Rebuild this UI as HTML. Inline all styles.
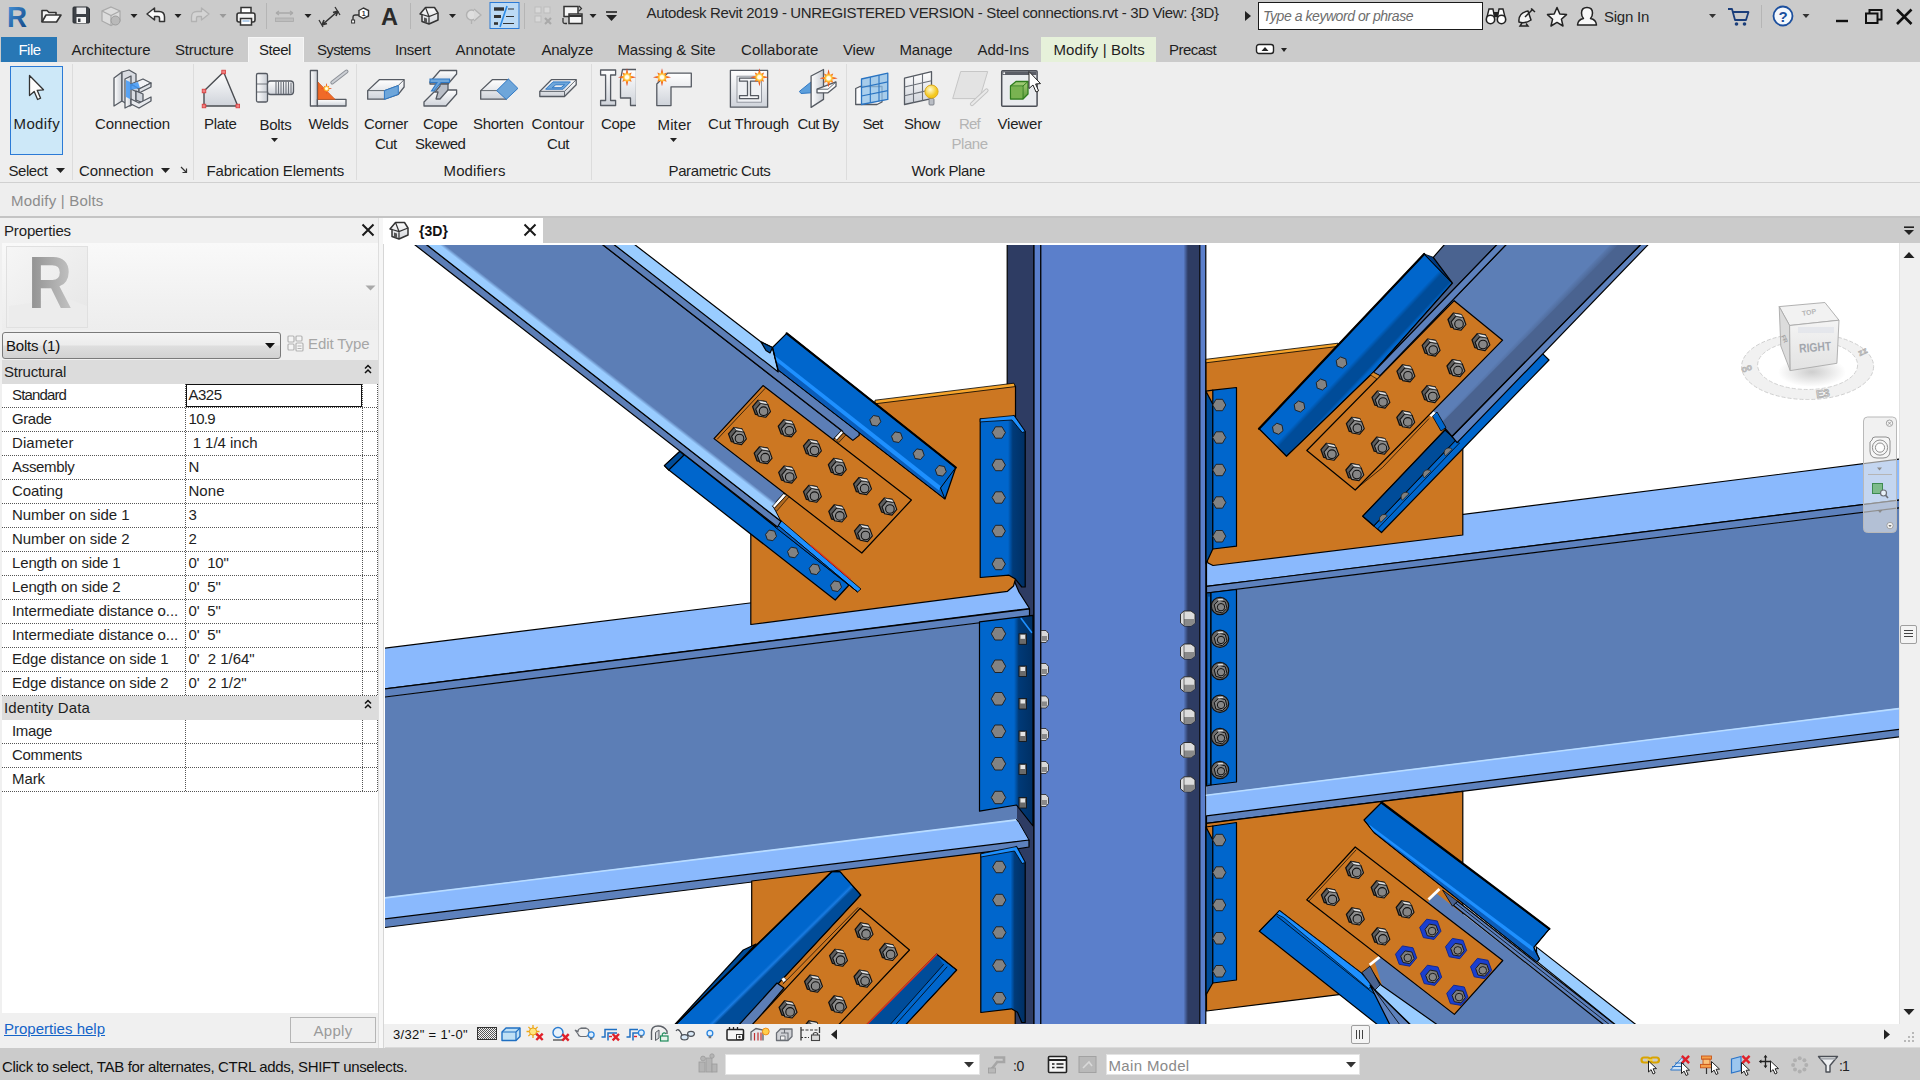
<!DOCTYPE html>
<html><head><meta charset="utf-8"><title>Autodesk Revit 2019 - Steel connections.rvt - 3D View: {3D}</title>
<style>
html,body{margin:0;padding:0}
body{width:1920px;height:1080px;position:relative;overflow:hidden;background:#cbcbcb;font-family:"Liberation Sans",sans-serif}
.t{position:absolute;white-space:nowrap;display:block}
.r{position:absolute;box-sizing:border-box;display:block}
</style></head><body>

<div class="r" style="left:0px;top:0px;width:1920px;height:62px;background:#cbcbcb;"></div>
<svg class="r" style="left:0px;top:0px;" width="640" height="34" viewBox="0 0 640 34"><defs><linearGradient id="rlg" x1="0" y1="0" x2="1" y2="1"><stop offset="0" stop-color="#4b9be0"/><stop offset="1" stop-color="#0d3f7e"/></linearGradient><linearGradient id="gl" x1="0" y1="0" x2="0" y2="1"><stop offset="0" stop-color="#fdfdfd"/><stop offset="1" stop-color="#d4d6da"/></linearGradient></defs><text x="7" y="27" font-family="Liberation Sans, sans-serif" font-weight="bold" font-size="30" fill="url(#rlg)" textLength="20" lengthAdjust="spacingAndGlyphs">R</text><g transform="translate(41,8)"><path d="M1 14 V2.5 H6 L8 4.5 H15 V7" fill="#f4f4f4" stroke="#333" stroke-width="1.6" stroke-linejoin="round"/><path d="M1 14 L5 7 H20 L15.5 14 Z" fill="#fafafa" stroke="#333" stroke-width="1.6" stroke-linejoin="round"/></g><g transform="translate(72,6)"><path d="M1 2 Q1 1 2 1 H15.5 L17.5 3 V16 Q17.5 17 16.5 17 H2 Q1 17 1 16 Z" fill="#3c4046" stroke="#2b2e33" stroke-width="1"/><rect x="4.5" y="1.5" width="9.5" height="6.5" fill="#e9eaec"/><rect x="4.5" y="11" width="9.5" height="6" fill="#f5f5f5"/><rect x="6" y="12.5" width="2.5" height="3.5" fill="#3c4046"/></g><g transform="translate(101,6)"><path d="M10 1 L19 5 V15 L10 19.5 L1 15 V5 Z" fill="#dcdcdc" stroke="#a9a9a9" stroke-width="1.2"/><path d="M1 5 L10 9.5 L19 5 M10 9.5 V19.5" fill="none" stroke="#a9a9a9" stroke-width="1.2"/><circle cx="14.5" cy="14.5" r="4.5" fill="#b9b9b9" stroke="#9d9d9d"/></g><g transform="translate(130.5,14)"><path d="M0 0 L7 0 L3.5 4 Z" fill="#222"/></g><g transform="translate(146,7)"><path d="M1 7 L8.5 1 V4.5 H13 Q18.5 4.5 18.5 10 V14.5 H13.5 V11 Q13.5 9.5 12 9.5 H8.5 V13 Z" fill="#fafafa" stroke="#333" stroke-width="1.5" stroke-linejoin="round"/></g><g transform="translate(174.5,14)"><path d="M0 0 L7 0 L3.5 4 Z" fill="#222"/></g><g transform="translate(191,7)"><path d="M18 7 L10.5 1 V4.5 H6 Q0.5 4.5 0.5 10 V14.5 H5.5 V11 Q5.5 9.5 7 9.5 H10.5 V13 Z" fill="#d4d4d4" stroke="#b2b2b2" stroke-width="1.3" stroke-linejoin="round"/></g><g transform="translate(219.5,14)"><path d="M0 0 L7 0 L3.5 4 Z" fill="#9a9a9a"/></g><g transform="translate(236,6)"><rect x="5" y="1.5" width="10" height="6" fill="#fff" stroke="#333" stroke-width="1.5"/><rect x="1" y="7" width="18" height="9" rx="2" fill="#f2f2f2" stroke="#333" stroke-width="1.6"/><rect x="4.5" y="12.5" width="11" height="6.5" fill="#fff" stroke="#333" stroke-width="1.5"/><path d="M6.5 15 H13.5" stroke="#6aa0d8" stroke-width="1"/></g><path d="M266.5 3 V29" stroke="#b5b5b5" stroke-width="1"/><g transform="translate(275,9)"><path d="M1 4 H18 M1 4 L4 2 M1 4 L4 6 M18 4 L15 2 M18 4 L15 6" fill="none" stroke="#a9a9a9" stroke-width="1.3"/><rect x="0.5" y="9" width="18" height="3.5" fill="#bdbdbd" stroke="#a9a9a9" stroke-width="0.8"/></g><g transform="translate(304.5,14)"><path d="M0 0 L7 0 L3.5 4 Z" fill="#222"/></g><g transform="translate(319,6)"><path d="M3 19 L19 5 M3 19 L5 14 M3 19 L8 17.5 M19 5 L14 6.5 M19 5 L17 10" fill="none" stroke="#333" stroke-width="1.6"/><path d="M0 14 L4 21 M16 1 L21 9" stroke="#333" stroke-width="1.3"/></g><g transform="translate(351,6)"><path d="M8 4.5 L12.5 2 L17.5 4.5 V10 L12.5 12.5 L8 10 Z" fill="#fff" stroke="#333" stroke-width="1.4"/><text x="10.8" y="10.2" font-size="7" font-weight="bold" fill="#333" font-family="Liberation Sans, sans-serif">1</text><path d="M8 9 H4.5 Q2 9 2 11.5 V14.5" fill="none" stroke="#333" stroke-width="1.4"/><rect x="0.6" y="14" width="3" height="3" fill="#fff" stroke="#333"/></g><text x="381" y="25" font-family="Liberation Sans, sans-serif" font-weight="bold" font-size="24" fill="#2b2b2b" textLength="17" lengthAdjust="spacingAndGlyphs">A</text><path d="M410.5 3 V29" stroke="#b5b5b5" stroke-width="1"/><g transform="translate(419,6) scale(1.0)"><path d="M1 8 L6.5 1.5 L15.5 1.5 L19 7 V14 L10 18 L3 15.5 V8.5 Z" fill="url(#gl)" stroke="#333" stroke-width="1.5" stroke-linejoin="round"/><path d="M3 8.5 L10 10.5 L19 7 M10 10.5 V18 M6.5 1.5 L10 10.5" fill="none" stroke="#333" stroke-width="1.2"/><path d="M5 11.5 L8 12.5 V17 L5 16 Z" fill="#555"/></g><g transform="translate(449,14)"><path d="M0 0 L7 0 L3.5 4 Z" fill="#222"/></g><g transform="translate(465,7)"><circle cx="6.5" cy="8" r="5" fill="#dedede" stroke="#b2b2b2" stroke-width="1.5"/><path d="M9 2 L16 8 L9 14" fill="#d8d8d8" stroke="#b2b2b2" stroke-width="1.3"/><path d="M6.5 13 V17" stroke="#b2b2b2" stroke-width="1.3"/></g><rect x="490" y="2.5" width="29" height="26" fill="#bcdaf5" stroke="#2b7ad6" stroke-width="1"/><g transform="translate(493,6)"><path d="M1 3 H11" stroke="#333" stroke-width="3.4"/><path d="M1 10.5 H8" stroke="#333" stroke-width="3"/><path d="M1 17.5 H5" stroke="#333" stroke-width="2.6"/><path d="M15 3 H21 M13 10.5 H21 M10 17.5 H21" stroke="#333" stroke-width="1.2"/><path d="M14 0 L7 21" stroke="#2b8ae6" stroke-width="1.6"/></g><path d="M524.5 3 V29" stroke="#b5b5b5" stroke-width="1"/><g transform="translate(534,6)"><rect x="1" y="1" width="6" height="6" fill="#d8d8d8" stroke="#bdbdbd"/><rect x="10" y="1" width="6" height="6" fill="#d8d8d8" stroke="#bdbdbd"/><rect x="1" y="10" width="6" height="6" fill="#d8d8d8" stroke="#bdbdbd"/><path d="M11 12 L17 18 M17 12 L11 18" stroke="#a9a9a9" stroke-width="2.2"/></g><g transform="translate(562,5)"><rect x="2" y="1.5" width="14" height="10" fill="#f6f6f6" stroke="#333" stroke-width="1.5"/><rect x="7" y="9" width="13" height="9.5" fill="#f6f6f6" stroke="#333" stroke-width="1.5"/><path d="M7 11 H20" stroke="#333" stroke-width="2"/><path d="M1 13 V17 Q1 18.5 3 18.5 H5" fill="none" stroke="#333" stroke-width="1.3"/><path d="M17 1 L19.5 3.5 L17 6" fill="none" stroke="#333" stroke-width="1.2"/></g><g transform="translate(589.5,14)"><path d="M0 0 L7 0 L3.5 4 Z" fill="#222"/></g><g transform="translate(606,11)"><path d="M0 1 H11" stroke="#222" stroke-width="1.6"/><path d="M0 4 L11 4 L5.5 10 Z" fill="#222"/></g></svg>
<span class="t" style="left:646.5px;top:3.0px;font-size:15px;line-height:19px;color:#262626;letter-spacing:-0.36px;">Autodesk Revit 2019 - UNREGISTERED VERSION - Steel connections.rvt - 3D View: {3D}</span>
<svg class="r" style="left:1244px;top:10px;" width="8" height="12" viewBox="0 0 8 12"><path d="M1 1 L7 6 L1 11 Z" fill="#222"/></svg>
<div class="r" style="left:1258px;top:2px;width:225px;height:28px;background:#fff;border:1px solid #1a1a1a"></div>
<span class="t" style="left:1263.0px;top:7.0px;font-size:14px;line-height:18px;color:#6d6d6d;letter-spacing:-0.45px;font-style:italic;">Type a keyword or phrase</span>
<svg class="r" style="left:0px;top:0px;" width="1920" height="34" viewBox="0 0 1920 34"><g transform="translate(1485,7)"><path d="M2 10 L4 2 H8 L9.5 10 Z M12.5 10 L14 2 H18 L20 10 Z" fill="#fff" stroke="#222" stroke-width="1.4"/><circle cx="5.5" cy="12.5" r="4.2" fill="#fff" stroke="#222" stroke-width="1.6"/><circle cx="16.5" cy="12.5" r="4.2" fill="#fff" stroke="#222" stroke-width="1.6"/><rect x="9" y="5" width="4" height="5" fill="#222"/></g><g transform="translate(1516,7)"><path d="M3 15 Q2 6 12 4 L15 13 Q9 17 3 15 Z" fill="#f4f4f4" stroke="#222" stroke-width="1.5"/><path d="M9 10 L17 2 M15 1.5 L19 5" stroke="#222" stroke-width="1.5"/><path d="M6 16 L4 19 H12 L10 16.5" fill="none" stroke="#222" stroke-width="1.4"/></g><g transform="translate(1546,6)"><path d="M11 1.5 L13.8 8 L20.5 8.6 L15.4 13.2 L17 20 L11 16.4 L5 20 L6.6 13.2 L1.5 8.6 L8.2 8 Z" fill="#f8f8f8" stroke="#222" stroke-width="1.5" stroke-linejoin="round"/></g><g transform="translate(1576,6)"><path d="M1.5 19 Q2 13.5 7.5 12.5 Q5.5 10.5 5.5 7 Q5.5 1.5 11 1.5 Q16.5 1.5 16.5 7 Q16.5 10.5 14.5 12.5 Q20 13.5 20.5 19 Z" fill="#f8f8f8" stroke="#222" stroke-width="1.5" stroke-linejoin="round"/></g><g transform="translate(1709,14)"><path d="M0 0 L7 0 L3.5 4 Z" fill="#333"/></g><g transform="translate(1727,7)"><path d="M1 2 H5 L8 13 H19 L21.5 5 H6" fill="none" stroke="#1b3e7a" stroke-width="1.8" stroke-linejoin="round"/><circle cx="9.5" cy="17" r="1.8" fill="#1b3e7a"/><circle cx="17.5" cy="17" r="1.8" fill="#1b3e7a"/></g><path d="M1761.5 5 V28" stroke="#b5b5b5" stroke-width="1"/><g transform="translate(1772,5)"><circle cx="11" cy="11" r="9.5" fill="#f4f8fd" stroke="#1b4f9e" stroke-width="1.8"/><text x="6.6" y="16.5" font-family="Liberation Sans, sans-serif" font-weight="bold" font-size="15" fill="#1b4f9e">?</text></g><g transform="translate(1802.5,14)"><path d="M0 0 L7 0 L3.5 4 Z" fill="#333"/></g><path d="M1836 21 H1848" stroke="#111" stroke-width="2.4"/><rect x="1866" y="13.5" width="11.5" height="9.5" fill="none" stroke="#111" stroke-width="2"/><path d="M1869.5 13 V10 H1881.5 V19.5 H1878" fill="none" stroke="#111" stroke-width="2"/><path d="M1897 9.5 L1911.5 24 M1911.5 9.5 L1897 24" stroke="#111" stroke-width="2.6"/></svg>
<span class="t" style="left:1604.0px;top:7.0px;font-size:15px;line-height:19px;color:#262626;letter-spacing:-0.24px;">Sign In</span>
<div class="r" style="left:1px;top:37px;width:56px;height:25px;background:#2877b5;"></div>
<span class="t" style="left:18.5px;top:40.0px;font-size:15px;line-height:19px;color:#ffffff;letter-spacing:-0.54px;">File</span>
<div class="r" style="left:248px;top:37px;width:56px;height:26px;background:#eeeeee;border:1px solid #f6f6f6;border-bottom:none"></div>
<div class="r" style="left:1041px;top:37px;width:115px;height:25px;background:#e6f1da;"></div>
<span class="t" style="left:71.5px;top:40.0px;font-size:15px;line-height:19px;color:#1e1e1e;letter-spacing:-0.09px;">Architecture</span>
<span class="t" style="left:175.0px;top:40.0px;font-size:15px;line-height:19px;color:#1e1e1e;letter-spacing:-0.26px;">Structure</span>
<span class="t" style="left:259.0px;top:40.0px;font-size:15px;line-height:19px;color:#1e1e1e;letter-spacing:-0.44px;">Steel</span>
<span class="t" style="left:317.0px;top:40.0px;font-size:15px;line-height:19px;color:#1e1e1e;letter-spacing:-0.64px;">Systems</span>
<span class="t" style="left:395.0px;top:40.0px;font-size:15px;line-height:19px;color:#1e1e1e;letter-spacing:-0.34px;">Insert</span>
<span class="t" style="left:455.5px;top:40.0px;font-size:15px;line-height:19px;color:#1e1e1e;letter-spacing:-0.01px;">Annotate</span>
<span class="t" style="left:541.5px;top:40.0px;font-size:15px;line-height:19px;color:#1e1e1e;letter-spacing:-0.27px;">Analyze</span>
<span class="t" style="left:617.5px;top:40.0px;font-size:15px;line-height:19px;color:#1e1e1e;letter-spacing:-0.15px;">Massing &amp; Site</span>
<span class="t" style="left:741.0px;top:40.0px;font-size:15px;line-height:19px;color:#1e1e1e;letter-spacing:0.07px;">Collaborate</span>
<span class="t" style="left:843.0px;top:40.0px;font-size:15px;line-height:19px;color:#1e1e1e;letter-spacing:-0.19px;">View</span>
<span class="t" style="left:899.5px;top:40.0px;font-size:15px;line-height:19px;color:#1e1e1e;letter-spacing:-0.20px;">Manage</span>
<span class="t" style="left:977.5px;top:40.0px;font-size:15px;line-height:19px;color:#1e1e1e;letter-spacing:-0.03px;">Add-Ins</span>
<span class="t" style="left:1053.5px;top:40.0px;font-size:15px;line-height:19px;color:#1e1e1e;letter-spacing:0.12px;">Modify | Bolts</span>
<span class="t" style="left:1169.0px;top:40.0px;font-size:15px;line-height:19px;color:#1e1e1e;letter-spacing:-0.55px;">Precast</span>
<svg class="r" style="left:1255px;top:43px;" width="36" height="14" viewBox="0 0 36 14"><rect x="1.5" y="1.5" width="17" height="9" rx="2.5" fill="#fff" stroke="#222" stroke-width="1.4"/><path d="M6.5 8 L10 4 L13.5 8 Z" fill="#222"/><path d="M26 5 L32 5 L29 9 Z" fill="#222"/></svg>
<div class="r" style="left:0px;top:62px;width:1920px;height:121px;background:#eeeeee;"></div>
<div class="r" style="left:0px;top:182px;width:1920px;height:1px;background:#d0d0d0;"></div>
<div class="r" style="left:0px;top:183px;width:1920px;height:33px;background:#eeeeee;"></div>
<div class="r" style="left:0px;top:216px;width:1920px;height:2px;background:#c4c4c4;"></div>
<div class="r" style="left:72px;top:64px;width:1px;height:116px;background:#dcdcdc;"></div>
<div class="r" style="left:193px;top:64px;width:1px;height:116px;background:#dcdcdc;"></div>
<div class="r" style="left:356px;top:64px;width:1px;height:116px;background:#dcdcdc;"></div>
<div class="r" style="left:591px;top:64px;width:1px;height:116px;background:#dcdcdc;"></div>
<div class="r" style="left:846px;top:64px;width:1px;height:116px;background:#dcdcdc;"></div>
<div class="r" style="left:10px;top:66px;width:53px;height:89px;background:#cde8f8;border:1px solid #2b7ad6"></div>
<span class="t" style="left:13.5px;top:114.0px;font-size:15px;line-height:19px;color:#1e1e1e;letter-spacing:0.39px;">Modify</span>
<span class="t" style="left:95.0px;top:114.0px;font-size:15px;line-height:19px;color:#1e1e1e;letter-spacing:-0.09px;">Connection</span>
<span class="t" style="left:204.0px;top:114.0px;font-size:15px;line-height:19px;color:#1e1e1e;letter-spacing:-0.34px;">Plate</span>
<span class="t" style="left:259.5px;top:115.0px;font-size:15px;line-height:19px;color:#1e1e1e;letter-spacing:-0.27px;">Bolts</span>
<span class="t" style="left:308.5px;top:114.0px;font-size:15px;line-height:19px;color:#1e1e1e;letter-spacing:-0.28px;">Welds</span>
<span class="t" style="left:364.0px;top:114.0px;font-size:15px;line-height:19px;color:#1e1e1e;letter-spacing:-0.31px;">Corner</span>
<span class="t" style="left:375.0px;top:134.0px;font-size:15px;line-height:19px;color:#1e1e1e;letter-spacing:-0.61px;">Cut</span>
<span class="t" style="left:423.0px;top:114.0px;font-size:15px;line-height:19px;color:#1e1e1e;letter-spacing:-0.34px;">Cope</span>
<span class="t" style="left:415.0px;top:134.0px;font-size:15px;line-height:19px;color:#1e1e1e;letter-spacing:-0.48px;">Skewed</span>
<span class="t" style="left:473.0px;top:114.0px;font-size:15px;line-height:19px;color:#1e1e1e;letter-spacing:-0.29px;">Shorten</span>
<span class="t" style="left:531.5px;top:114.0px;font-size:15px;line-height:19px;color:#1e1e1e;letter-spacing:-0.12px;">Contour</span>
<span class="t" style="left:547.0px;top:134.0px;font-size:15px;line-height:19px;color:#1e1e1e;letter-spacing:-0.45px;">Cut</span>
<span class="t" style="left:601.0px;top:114.0px;font-size:15px;line-height:19px;color:#1e1e1e;letter-spacing:-0.34px;">Cope</span>
<span class="t" style="left:657.5px;top:115.0px;font-size:15px;line-height:19px;color:#1e1e1e;letter-spacing:0.13px;">Miter</span>
<span class="t" style="left:708.0px;top:114.0px;font-size:15px;line-height:19px;color:#1e1e1e;letter-spacing:-0.19px;">Cut Through</span>
<span class="t" style="left:797.5px;top:114.0px;font-size:15px;line-height:19px;color:#1e1e1e;letter-spacing:-0.67px;">Cut By</span>
<span class="t" style="left:862.5px;top:114.0px;font-size:15px;line-height:19px;color:#1e1e1e;letter-spacing:-0.84px;">Set</span>
<span class="t" style="left:904.0px;top:114.0px;font-size:15px;line-height:19px;color:#1e1e1e;letter-spacing:-0.38px;">Show</span>
<span class="t" style="left:997.5px;top:114.0px;font-size:15px;line-height:19px;color:#1e1e1e;letter-spacing:-0.18px;">Viewer</span>
<span class="t" style="left:959.0px;top:114.0px;font-size:15px;line-height:19px;color:#b4b4b4;letter-spacing:-0.78px;">Ref</span>
<span class="t" style="left:951.5px;top:134.0px;font-size:15px;line-height:19px;color:#b4b4b4;letter-spacing:-0.47px;">Plane</span>
<span class="t" style="left:8.5px;top:161.0px;font-size:15px;line-height:19px;color:#1e1e1e;letter-spacing:-0.45px;">Select</span>
<span class="t" style="left:79.0px;top:161.0px;font-size:15px;line-height:19px;color:#1e1e1e;letter-spacing:-0.14px;">Connection</span>
<span class="t" style="left:206.5px;top:161.0px;font-size:15px;line-height:19px;color:#1e1e1e;letter-spacing:-0.17px;">Fabrication Elements</span>
<span class="t" style="left:443.5px;top:161.0px;font-size:15px;line-height:19px;color:#1e1e1e;letter-spacing:0.13px;">Modifiers</span>
<span class="t" style="left:668.5px;top:161.0px;font-size:15px;line-height:19px;color:#1e1e1e;letter-spacing:-0.37px;">Parametric Cuts</span>
<span class="t" style="left:911.5px;top:161.0px;font-size:15px;line-height:19px;color:#1e1e1e;letter-spacing:-0.38px;">Work Plane</span>
<svg class="r" style="left:56px;top:168px;" width="9" height="5" viewBox="0 0 9 5"><path d="M0 0 L9 0 L4.5 5 Z" fill="#222"/></svg>
<svg class="r" style="left:161px;top:168px;" width="9" height="5" viewBox="0 0 9 5"><path d="M0 0 L9 0 L4.5 5 Z" fill="#222"/></svg>
<svg class="r" style="left:180px;top:166px;" width="8" height="8" viewBox="0 0 8 8"><path d="M1 1 L6 6 M2.5 6.5 L6.5 6.5 L6.5 2.5" fill="none" stroke="#333" stroke-width="1.2"/></svg>
<svg class="r" style="left:271px;top:138px;" width="8" height="5" viewBox="0 0 8 5"><path d="M0 0 L7 0 L3.5 4 Z" fill="#222"/></svg>
<svg class="r" style="left:670px;top:138px;" width="8" height="5" viewBox="0 0 8 5"><path d="M0 0 L7 0 L3.5 4 Z" fill="#222"/></svg>
<svg class="r" style="left:0px;top:0px;" width="1100" height="122" viewBox="0 0 1100 122"><defs><linearGradient id="ig" x1="0" y1="0" x2="0" y2="1"><stop offset="0" stop-color="#ffffff"/><stop offset="1" stop-color="#cfd3da"/></linearGradient><linearGradient id="ig2" x1="0" y1="0" x2="1" y2="0"><stop offset="0" stop-color="#ffffff"/><stop offset="1" stop-color="#c9cdd4"/></linearGradient><radialGradient id="spk"><stop offset="0" stop-color="#ffffff"/><stop offset="0.22" stop-color="#fff1a0"/><stop offset="0.4" stop-color="#ffb224"/><stop offset="0.62" stop-color="#f2641c"/><stop offset="1" stop-color="#d8281a"/></radialGradient><radialGradient id="bulb" cx="0.4" cy="0.35"><stop offset="0" stop-color="#fffbd0"/><stop offset="1" stop-color="#f4c81e"/></radialGradient><linearGradient id="grn" x1="0" y1="0" x2="0" y2="1"><stop offset="0" stop-color="#a6cf7a"/><stop offset="1" stop-color="#5c9a3a"/></linearGradient></defs><path d="M29.5 75.5 V95.5 L34.2 91.5 L37.6 99.5 L40.6 98.2 L37.2 90.3 L43.5 89.8 Z" fill="#fdfdfd" stroke="#333" stroke-width="1.3" stroke-linejoin="round"/><g stroke="#555a62" stroke-width="1.3" stroke-linejoin="round"><path d="M114 78 L122 72 V101 L114 106 Z" fill="url(#ig2)"/><path d="M122 72 L129 70 L136 74 V102 L130 106 L122 101 Z" fill="#d9dce2"/><path d="M125 79 L131 76 V105 L125 108 Z" fill="url(#ig2)"/><path d="M131 84 L143 79 L151 83 L139 89 Z" fill="#f2f3f6"/><path d="M131 84 L139 89 V93 L131 89 Z" fill="#cfd3da"/><path d="M139 89 L151 83 V87 L139 93 Z" fill="#dfe2e7"/><path d="M136 91 L143 94 V103 L136 100 Z" fill="#cfd3da"/><path d="M131 99 L139 103 L151 97 V101 L139 108 L131 104 Z" fill="#e8eaee"/></g><path d="M126 80 L130 82 V99 L126 97 Z M130 84 L138 82 L140 88 L130 90 Z" fill="#3f97f5" opacity="0.85"/><path d="M223.6 72 L237.8 106 H204 V91 Z" fill="url(#ig)" stroke="#4a4d52" stroke-width="1.4" stroke-linejoin="round"/><rect x="221.79999999999998" y="70.2" width="3.6" height="3.6" fill="#f08080" stroke="#d83a3a" stroke-width="0.8"/><rect x="202.2" y="89.2" width="3.6" height="3.6" fill="#f08080" stroke="#d83a3a" stroke-width="0.8"/><rect x="202.2" y="104.2" width="3.6" height="3.6" fill="#f08080" stroke="#d83a3a" stroke-width="0.8"/><rect x="236.0" y="104.2" width="3.6" height="3.6" fill="#f08080" stroke="#d83a3a" stroke-width="0.8"/><g stroke="#555a62" stroke-width="1.3" stroke-linejoin="round"><rect x="256.5" y="73.5" width="11" height="28.5" rx="1.5" fill="url(#ig2)"/><path d="M256.5 84 H267.5 M256.5 92 H267.5" stroke-width="0.8"/><rect x="267.5" y="81" width="26" height="13.5" rx="3" fill="url(#ig)"/></g><path d="M276 81.5 V94 M278.5 81.5 V94 M281 81.5 V94 M283.5 81.5 V94 M286 81.5 V94 M288.5 81.5 V94 M291 82.5 V93" stroke="#6e737b" stroke-width="1.1"/><g stroke="#555a62" stroke-width="1.3" stroke-linejoin="round"><rect x="310.4" y="70.5" width="7" height="35.5" fill="url(#ig2)"/><rect x="317.4" y="99.4" width="28.6" height="6.6" fill="url(#ig)"/></g><path d="M318 82 V99.4 H335.2 Z" fill="#f06a28" stroke="#c8501a" stroke-width="0.6"/><path d="M332.3 82.5 L346.5 71.5" stroke="#8d9198" stroke-width="4" stroke-linecap="round"/><path d="M332.3 82.5 L346.5 71.5" stroke="#cdd0d5" stroke-width="2" stroke-linecap="round"/><polygon points="326.5,83.1 327.4,86.5 329.3,85.8 328.6,87.7 332.0,88.6 328.6,89.5 329.3,91.4 327.4,90.7 326.5,94.1 325.6,90.7 323.7,91.4 324.4,89.5 321.0,88.6 324.4,87.7 323.7,85.8 325.6,86.5" fill="url(#spk)"/><circle cx="326.5" cy="88.6" r="1.2" fill="#fffdf0"/><g stroke="#555a62" stroke-width="1.3" stroke-linejoin="round"><path d="M367.7 90.6 L379.3 79.7 H404.1 V87 L398.3 94.3 L384.4 99.2 H367.7 Z" fill="url(#ig)"/><path d="M367.7 90.6 H384.4 L398.3 85.5 L404.1 79.7" fill="none" stroke-width="0.9"/></g><path d="M384.4 90.6 L398.3 85.5 V94.3 L384.4 99.4 Z" fill="#6ea6da" stroke="#2f78c4" stroke-width="1"/><g stroke="#555a62" stroke-width="1.3" stroke-linejoin="round"><path d="M430 82 L440 70.5 H456.6 V74 L448 84 H430 Z" fill="url(#ig)"/><path d="M432.5 95 L440 86 V84 H448 V95 L440 103 Z" fill="#b9bec7"/><path d="M432.5 95 L436 93 V104 H432.5 Z" fill="#e6e8ec"/><path d="M424 102 L434 92 H438 L436 99 H440 L448 90 H456.6 V94 L446 106 H424 Z" fill="url(#ig)"/></g><path d="M430 79 H449.5 V82.5 H441 L434 91 L431.5 91 L437 82.5 H430 Z" fill="#6ea6da" stroke="#2f78c4" stroke-width="1.1"/><g stroke="#555a62" stroke-width="1.3" stroke-linejoin="round"><path d="M480.7 90.6 L492.3 79.7 H508.4 L506.2 99.2 H480.7 Z" fill="url(#ig)"/><path d="M480.7 90.6 H497" fill="none" stroke-width="0.9"/></g><path d="M508.4 79 L517.9 88.4 L506.2 99.4 L496.7 90.6 Z" fill="#6ea6da" stroke="#2f78c4" stroke-width="1"/><g stroke="#555a62" stroke-width="1.3" stroke-linejoin="round"><path d="M539.8 91.4 L551.4 79.7 H576.2 V84.8 L564.5 96.5 H539.8 Z" fill="url(#ig)"/><path d="M539.8 91.4 H564.5 L576.2 79.7 M564.5 91.4 V96.5" fill="none" stroke-width="0.9"/></g><path d="M545.6 89.2 L552.9 81.9 H570.4 L563.1 89.2 Z M552.2 87.7 L555.8 84.8 H564.6 L561 87.7 Z" fill="#6ea6da" fill-rule="evenodd" stroke="#2f78c4" stroke-width="1"/><path d="M600.6 70 h15 v5 h-5.0 v25.5 h5.0 v5 h-15 v-5 h5.0 v-25.5 h-5.0 Z" fill="url(#ig)" stroke="#555a62" stroke-width="1.3" stroke-linejoin="round"/><path d="M622.5 69.5 H636.5 V105.5 H630.5 V98 H620.5 V80 L622.5 69.5 Z" fill="url(#ig)" stroke="#555a62" stroke-width="1.3" stroke-linejoin="round"/><rect x="636" y="68" width="3" height="39" fill="#eeeeee"/><polygon points="627.0,68.2 628.4,73.7 631.6,72.6 630.5,75.8 636.0,77.2 630.5,78.6 631.6,81.8 628.4,80.7 627.0,86.2 625.6,80.7 622.4,81.8 623.5,78.6 618.0,77.2 623.5,75.8 622.4,72.6 625.6,73.7" fill="url(#spk)"/><circle cx="627" cy="77.2" r="2.0" fill="#fffdf0"/><path d="M656.8 84 L667.5 73.2 H691.3 V86.8 H671 V105.6 H656.8 Z" fill="url(#ig)" stroke="#555a62" stroke-width="1.3" stroke-linejoin="round" stroke-width="1.6"/><polygon points="662.0,68.2 663.4,73.7 666.6,72.6 665.5,75.8 671.0,77.2 665.5,78.6 666.6,81.8 663.4,80.7 662.0,86.2 660.6,80.7 657.4,81.8 658.5,78.6 653.0,77.2 658.5,75.8 657.4,72.6 660.6,73.7" fill="url(#spk)"/><circle cx="662" cy="77.2" r="2.0" fill="#fffdf0"/><rect x="730.4" y="70.4" width="37.2" height="36.8" fill="url(#ig)" stroke="#555a62" stroke-width="1.3" stroke-linejoin="round" stroke-width="1.6"/><rect x="737" y="76.2" width="24.5" height="26" fill="#eef0f3" stroke="#8a8f98" stroke-width="0.9"/><path d="M739.5 78.2 h19 v3 h-8.0 v14.5 h8.0 v3 h-19 v-3 h8.0 v-14.5 h-8.0 Z" fill="#f6f7f9" stroke="#555a62" stroke-width="1.3" stroke-linejoin="round"/><polygon points="759.4,68.2 760.8,73.7 764.0,72.6 762.9,75.8 768.4,77.2 762.9,78.6 764.0,81.8 760.8,80.7 759.4,86.2 758.0,80.7 754.8,81.8 755.9,78.6 750.4,77.2 755.9,75.8 754.8,72.6 758.0,73.7" fill="url(#spk)"/><circle cx="759.4" cy="77.2" r="2.0" fill="#fffdf0"/><path d="M799.4 91.4 L811.1 81.9 V92.8 L801 93.5 Z" fill="#5c9fdc" stroke="#2f78c4" stroke-width="1"/><g stroke="#555a62" stroke-width="1.3" stroke-linejoin="round"><path d="M811.1 76 L823.5 69.5 V99.4 L811.1 107.4 Z" fill="url(#ig2)"/><path d="M817 89.2 L836 81.9 V86.3 L828 92.8 H817 Z" fill="#fafbfc"/><path d="M817 89.2 H828 L836 81.9" fill="none" stroke-width="0.9"/></g><polygon points="828.6,69.2 830.0,74.7 833.2,73.6 832.1,76.8 837.6,78.2 832.1,79.6 833.2,82.8 830.0,81.7 828.6,87.2 827.2,81.7 824.0,82.8 825.1,79.6 819.6,78.2 825.1,76.8 824.0,73.6 827.2,74.7" fill="url(#spk)"/><circle cx="828.6" cy="78.2" r="2.0" fill="#fffdf0"/><path d="M855.7 88.5 L860 86.5 H882 V102 L877 104.5 H855.7 Z" fill="#fbfbfc" stroke="#555a62" stroke-width="1.3" stroke-linejoin="round"/><path d="M861.5 79 L887.8 73.1 V99.4 L861.5 104.5 Z" fill="#8fc0e8" fill-opacity="0.75" stroke="#2a74c2" stroke-width="1.3" stroke-linejoin="round"/><path d="M870.3 77 V102.8 M879 75.1 V101.1 M861.5 87.5 L887.8 81.9 M861.5 96 L887.8 90.6" stroke="#2a74c2" stroke-width="1.1" fill="none"/><path d="M904.5 78.2 L931.5 71.7 V98.6 L904.5 104.5 Z" fill="url(#ig)" stroke="#555a62" stroke-width="1.3" stroke-linejoin="round"/><path d="M913.5 76 V102.5 M922.5 73.9 V100.5 M904.5 87 L931.5 80.7 M904.5 95.7 L931.5 89.6" stroke="#6b7078" stroke-width="1.1" fill="none"/><rect x="929" y="98.5" width="5" height="6.5" rx="1" fill="#b9bdc4" stroke="#6b7078" stroke-width="0.8"/><circle cx="931.5" cy="91.6" r="6.6" fill="url(#bulb)" stroke="#d9a514" stroke-width="0.9"/><path d="M960.7 71.5 H987.7 L979.6 98.6 H952.7 Z" fill="#e3e3e3" stroke="#c6c6c6" stroke-width="1"/><path d="M986.5 90.5 L972 104" stroke="#c4c4c4" stroke-width="4.2" stroke-linecap="round"/><path d="M986.5 90.5 L972 104" stroke="#e9e9e9" stroke-width="2.2" stroke-linecap="round"/><rect x="1001.7" y="70.7" width="35.4" height="35.6" rx="1" fill="#e9ebee" stroke="#4c4f57" stroke-width="1.5"/><rect x="1002.4" y="71.4" width="34" height="3.6" fill="#5a5d66"/><circle cx="1004.2" cy="73.2" r="1" fill="#fff"/><path d="M1010.5 86 L1016 81.5 H1028 L1028 94 L1023 99 H1010.5 Z" fill="url(#grn)" stroke="#2f7d1e" stroke-width="1.3" stroke-linejoin="round"/><path d="M1010.5 86 H1023 L1028 81.5 M1023 86 V99" fill="none" stroke="#2f7d1e" stroke-width="1"/><path d="M1011.2 86.7 H1022.3 V98.3 H1011.2 Z" fill="#79b351"/><path d="M1029 71.5 V88.5 L1033 85 L1036 92 L1038.6 90.8 L1035.6 84 L1040.5 83.6 Z" fill="#fff" stroke="#222" stroke-width="1" stroke-linejoin="round"/></svg>
<span class="t" style="left:11.0px;top:191.0px;font-size:15px;line-height:19px;color:#8c8c8c;letter-spacing:0.20px;">Modify | Bolts</span>
<div class="r" style="left:0px;top:218px;width:385px;height:830px;background:#f0f0f0;"></div>
<div class="r" style="left:378px;top:218px;width:6px;height:830px;background:#f6f6f6;border-left:1px solid #dedede;border-right:1px solid #d6d6d6"></div>
<span class="t" style="left:4.0px;top:220.5px;font-size:15px;line-height:19px;color:#1e1e1e;letter-spacing:-0.14px;">Properties</span>
<svg class="r" style="left:361px;top:223px;" width="14" height="14" viewBox="0 0 14 14"><path d="M1.5 1.5 L12.5 12.5 M12.5 1.5 L1.5 12.5" stroke="#1a1a1a" stroke-width="2" fill="none"/></svg>
<div class="r" style="left:2px;top:243px;width:376px;height:87px;background:linear-gradient(#f9f9f9,#ededed);"></div>
<svg class="r" style="left:6px;top:246px;" width="82" height="82" viewBox="0 0 82 82"><defs><linearGradient id="rt" x1="0" y1="0" x2="1" y2="1"><stop offset="0" stop-color="#f6f6f6"/><stop offset="1" stop-color="#e6e6e6"/></linearGradient><linearGradient id="rr" x1="0" y1="0" x2="1" y2="0"><stop offset="0" stop-color="#8f8f8f"/><stop offset="1" stop-color="#c3c3c3"/></linearGradient></defs><rect x="0.5" y="0.5" width="81" height="81" fill="url(#rt)" stroke="#e0e0e0"/><path d="M3 60 L60 52 L81 60 V81 H3 Z" fill="#ececec"/><text x="22" y="61.5" font-family="Liberation Sans, sans-serif" font-weight="bold" font-size="74" fill="url(#rr)" textLength="44" lengthAdjust="spacingAndGlyphs">R</text></svg>
<svg class="r" style="left:365px;top:285px;" width="11" height="6" viewBox="0 0 11 6"><path d="M0.5 0.5 L10.5 0.5 L5.5 5.5 Z" fill="#a9a9a9"/></svg>
<div class="r" style="left:2px;top:332px;width:279px;height:27px;background:linear-gradient(#f4f4f4 0%,#ececec 48%,#dedede 52%,#d2d2d2 100%);border:1px solid #7a7a7a;border-radius:3px"></div>
<span class="t" style="left:6.0px;top:335.5px;font-size:15px;line-height:19px;color:#111;letter-spacing:-0.21px;">Bolts (1)</span>
<svg class="r" style="left:265px;top:343px;" width="10" height="6" viewBox="0 0 10 6"><path d="M0 0 L10 0 L5 5.5 Z" fill="#111"/></svg>
<svg class="r" style="left:287px;top:335px;" width="17" height="17" viewBox="0 0 17 17"><g fill="#f4f4f4" stroke="#b4b4b4" stroke-width="1.2"><rect x="1" y="1" width="6" height="6" rx="1"/><rect x="9" y="1" width="6" height="5" rx="1"/><rect x="1" y="9" width="6" height="6" rx="1"/><rect x="9" y="8" width="7" height="8" rx="1"/></g><path d="M10.5 11 H14.5 M10.5 13.5 H14.5" stroke="#b4b4b4" stroke-width="1"/></svg>
<span class="t" style="left:308.0px;top:333.5px;font-size:15px;line-height:19px;color:#a6a6a6;letter-spacing:-0.08px;">Edit Type</span>
<div class="r" style="left:2px;top:384px;width:376px;height:629px;background:#ffffff;"></div>
<div class="r" style="left:2px;top:360px;width:376px;height:24px;background:#dcdcdc;"></div>
<span class="t" style="left:4.0px;top:361.5px;font-size:15px;line-height:19px;color:#1e1e1e;letter-spacing:-0.22px;">Structural</span>
<div class="r" style="left:2px;top:696px;width:376px;height:24px;background:#dcdcdc;"></div>
<span class="t" style="left:4.0px;top:697.5px;font-size:15px;line-height:19px;color:#1e1e1e;letter-spacing:0.14px;">Identity Data</span>
<svg class="r" style="left:364px;top:364px;" width="8" height="10" viewBox="0 0 8 10"><path d="M1 4.5 L4 1.5 L7 4.5 M1 9 L4 6 L7 9" fill="none" stroke="#111" stroke-width="1.5"/></svg>
<svg class="r" style="left:364px;top:699px;" width="8" height="10" viewBox="0 0 8 10"><path d="M1 4.5 L4 1.5 L7 4.5 M1 9 L4 6 L7 9" fill="none" stroke="#111" stroke-width="1.5"/></svg>
<span class="t" style="left:12.0px;top:385.0px;font-size:15px;line-height:19px;color:#1e1e1e;letter-spacing:-0.86px;">Standard</span>
<span class="t" style="left:188.5px;top:385.0px;font-size:15px;line-height:19px;color:#1e1e1e;letter-spacing:-0.51px;white-space:pre;">A325</span>
<span class="t" style="left:12.0px;top:409.0px;font-size:15px;line-height:19px;color:#1e1e1e;letter-spacing:-0.44px;">Grade</span>
<span class="t" style="left:188.5px;top:409.0px;font-size:15px;line-height:19px;color:#1e1e1e;letter-spacing:-0.67px;white-space:pre;">10.9</span>
<span class="t" style="left:12.0px;top:433.0px;font-size:15px;line-height:19px;color:#1e1e1e;letter-spacing:0.08px;">Diameter</span>
<span class="t" style="left:188.5px;top:433.0px;font-size:15px;line-height:19px;color:#1e1e1e;letter-spacing:-0.02px;white-space:pre;"> 1 1/4 inch</span>
<span class="t" style="left:12.0px;top:457.0px;font-size:15px;line-height:19px;color:#1e1e1e;letter-spacing:-0.31px;">Assembly</span>
<span class="t" style="left:188.5px;top:457.0px;font-size:15px;line-height:19px;color:#1e1e1e;white-space:pre;">N</span>
<span class="t" style="left:12.0px;top:481.0px;font-size:15px;line-height:19px;color:#1e1e1e;letter-spacing:-0.10px;">Coating</span>
<span class="t" style="left:188.5px;top:481.0px;font-size:15px;line-height:19px;color:#1e1e1e;letter-spacing:0.04px;white-space:pre;">None</span>
<span class="t" style="left:12.0px;top:505.0px;font-size:15px;line-height:19px;color:#1e1e1e;letter-spacing:-0.06px;">Number on side 1</span>
<span class="t" style="left:188.5px;top:505.0px;font-size:15px;line-height:19px;color:#1e1e1e;white-space:pre;">3</span>
<span class="t" style="left:12.0px;top:529.0px;font-size:15px;line-height:19px;color:#1e1e1e;letter-spacing:-0.06px;">Number on side 2</span>
<span class="t" style="left:188.5px;top:529.0px;font-size:15px;line-height:19px;color:#1e1e1e;white-space:pre;">2</span>
<span class="t" style="left:12.0px;top:553.0px;font-size:15px;line-height:19px;color:#1e1e1e;letter-spacing:-0.15px;">Length on side 1</span>
<span class="t" style="left:188.5px;top:553.0px;font-size:15px;line-height:19px;color:#1e1e1e;letter-spacing:-0.22px;white-space:pre;">0'  10"</span>
<span class="t" style="left:12.0px;top:577.0px;font-size:15px;line-height:19px;color:#1e1e1e;letter-spacing:-0.15px;">Length on side 2</span>
<span class="t" style="left:188.5px;top:577.0px;font-size:15px;line-height:19px;color:#1e1e1e;letter-spacing:-0.20px;white-space:pre;">0'  5"</span>
<span class="t" style="left:12.0px;top:601.0px;font-size:15px;line-height:19px;color:#1e1e1e;letter-spacing:-0.09px;">Intermediate distance o...</span>
<span class="t" style="left:188.5px;top:601.0px;font-size:15px;line-height:19px;color:#1e1e1e;letter-spacing:-0.20px;white-space:pre;">0'  5"</span>
<span class="t" style="left:12.0px;top:625.0px;font-size:15px;line-height:19px;color:#1e1e1e;letter-spacing:-0.09px;">Intermediate distance o...</span>
<span class="t" style="left:188.5px;top:625.0px;font-size:15px;line-height:19px;color:#1e1e1e;letter-spacing:-0.20px;white-space:pre;">0'  5"</span>
<span class="t" style="left:12.0px;top:649.0px;font-size:15px;line-height:19px;color:#1e1e1e;letter-spacing:-0.16px;">Edge distance on side 1</span>
<span class="t" style="left:188.5px;top:649.0px;font-size:15px;line-height:19px;color:#1e1e1e;letter-spacing:-0.05px;white-space:pre;">0'  2 1/64"</span>
<span class="t" style="left:12.0px;top:673.0px;font-size:15px;line-height:19px;color:#1e1e1e;letter-spacing:-0.16px;">Edge distance on side 2</span>
<span class="t" style="left:188.5px;top:673.0px;font-size:15px;line-height:19px;color:#1e1e1e;letter-spacing:-0.02px;white-space:pre;">0'  2 1/2"</span>
<span class="t" style="left:12.0px;top:721.0px;font-size:15px;line-height:19px;color:#1e1e1e;letter-spacing:-0.34px;">Image</span>
<span class="t" style="left:12.0px;top:745.0px;font-size:15px;line-height:19px;color:#1e1e1e;letter-spacing:-0.31px;">Comments</span>
<span class="t" style="left:12.0px;top:769.0px;font-size:15px;line-height:19px;color:#1e1e1e;letter-spacing:-0.08px;">Mark</span>
<div class="r" style="left:2px;top:407px;width:376px;height:1px;background:none;background:repeating-linear-gradient(90deg,#555 0 1px,transparent 1px 2px)"></div>
<div class="r" style="left:2px;top:431px;width:376px;height:1px;background:none;background:repeating-linear-gradient(90deg,#555 0 1px,transparent 1px 2px)"></div>
<div class="r" style="left:2px;top:455px;width:376px;height:1px;background:none;background:repeating-linear-gradient(90deg,#555 0 1px,transparent 1px 2px)"></div>
<div class="r" style="left:2px;top:479px;width:376px;height:1px;background:none;background:repeating-linear-gradient(90deg,#555 0 1px,transparent 1px 2px)"></div>
<div class="r" style="left:2px;top:503px;width:376px;height:1px;background:none;background:repeating-linear-gradient(90deg,#555 0 1px,transparent 1px 2px)"></div>
<div class="r" style="left:2px;top:527px;width:376px;height:1px;background:none;background:repeating-linear-gradient(90deg,#555 0 1px,transparent 1px 2px)"></div>
<div class="r" style="left:2px;top:551px;width:376px;height:1px;background:none;background:repeating-linear-gradient(90deg,#555 0 1px,transparent 1px 2px)"></div>
<div class="r" style="left:2px;top:575px;width:376px;height:1px;background:none;background:repeating-linear-gradient(90deg,#555 0 1px,transparent 1px 2px)"></div>
<div class="r" style="left:2px;top:599px;width:376px;height:1px;background:none;background:repeating-linear-gradient(90deg,#555 0 1px,transparent 1px 2px)"></div>
<div class="r" style="left:2px;top:623px;width:376px;height:1px;background:none;background:repeating-linear-gradient(90deg,#555 0 1px,transparent 1px 2px)"></div>
<div class="r" style="left:2px;top:647px;width:376px;height:1px;background:none;background:repeating-linear-gradient(90deg,#555 0 1px,transparent 1px 2px)"></div>
<div class="r" style="left:2px;top:671px;width:376px;height:1px;background:none;background:repeating-linear-gradient(90deg,#555 0 1px,transparent 1px 2px)"></div>
<div class="r" style="left:2px;top:695px;width:376px;height:1px;background:none;background:repeating-linear-gradient(90deg,#555 0 1px,transparent 1px 2px)"></div>
<div class="r" style="left:2px;top:743px;width:376px;height:1px;background:none;background:repeating-linear-gradient(90deg,#555 0 1px,transparent 1px 2px)"></div>
<div class="r" style="left:2px;top:767px;width:376px;height:1px;background:none;background:repeating-linear-gradient(90deg,#555 0 1px,transparent 1px 2px)"></div>
<div class="r" style="left:2px;top:791px;width:376px;height:1px;background:none;background:repeating-linear-gradient(90deg,#555 0 1px,transparent 1px 2px)"></div>
<div class="r" style="left:185px;top:384px;width:1px;height:312px;background:none;background:repeating-linear-gradient(180deg,#555 0 1px,transparent 1px 2px)"></div>
<div class="r" style="left:362px;top:384px;width:1px;height:312px;background:none;background:repeating-linear-gradient(180deg,#555 0 1px,transparent 1px 2px)"></div>
<div class="r" style="left:377px;top:384px;width:1px;height:312px;background:none;background:repeating-linear-gradient(180deg,#555 0 1px,transparent 1px 2px)"></div>
<div class="r" style="left:185px;top:720px;width:1px;height:72px;background:none;background:repeating-linear-gradient(180deg,#555 0 1px,transparent 1px 2px)"></div>
<div class="r" style="left:362px;top:720px;width:1px;height:72px;background:none;background:repeating-linear-gradient(180deg,#555 0 1px,transparent 1px 2px)"></div>
<div class="r" style="left:377px;top:720px;width:1px;height:72px;background:none;background:repeating-linear-gradient(180deg,#555 0 1px,transparent 1px 2px)"></div>
<div class="r" style="left:186px;top:384px;width:176px;height:23px;background:#fff;border:1px solid #111"></div>
<span class="t" style="left:188.5px;top:385.0px;font-size:15px;line-height:19px;color:#1e1e1e;letter-spacing:-0.51px;">A325</span>
<span class="t" style="left:4.0px;top:1018.5px;font-size:15px;line-height:19px;color:#1464c8;letter-spacing:0.01px;text-decoration:underline;">Properties help</span>
<div class="r" style="left:290px;top:1017px;width:86px;height:26px;background:#efefef;border:1px solid #b5b5b5"></div>
<span class="t" style="left:313.5px;top:1021.0px;font-size:15px;line-height:19px;color:#9a9a9a;letter-spacing:0.30px;">Apply</span>
<div class="r" style="left:385px;top:218px;width:1535px;height:26px;background:#cbcbcb;"></div>
<div class="r" style="left:383px;top:218px;width:160px;height:26px;background:#ffffff;"></div>
<svg class="r" style="left:389px;top:221px;" width="22" height="20" viewBox="0 0 22 20"><defs><linearGradient id="gl2" x1="0" y1="0" x2="0" y2="1"><stop offset="0" stop-color="#fdfdfd"/><stop offset="1" stop-color="#d4d6da"/></linearGradient></defs><g transform="translate(0,0) scale(1.0)"><path d="M1 8 L6.5 1.5 L15.5 1.5 L19 7 V14 L10 18 L3 15.5 V8.5 Z" fill="url(#gl2)" stroke="#333" stroke-width="1.5" stroke-linejoin="round"/><path d="M3 8.5 L10 10.5 L19 7 M10 10.5 V18 M6.5 1.5 L10 10.5" fill="none" stroke="#333" stroke-width="1.2"/><path d="M5 11.5 L8 12.5 V17 L5 16 Z" fill="#555"/></g></svg>
<span class="t" style="left:419.0px;top:222.0px;font-size:14px;line-height:18px;color:#111;letter-spacing:0.05px;font-weight:bold;">{3D}</span>
<svg class="r" style="left:523px;top:223px;" width="14" height="14" viewBox="0 0 14 14"><path d="M1.5 1.5 L12.5 12.5 M12.5 1.5 L1.5 12.5" stroke="#1a1a1a" stroke-width="2" fill="none"/></svg>
<svg class="r" style="left:1903px;top:226px;" width="12" height="10" viewBox="0 0 12 10"><path d="M1 1.2 L11 1.2" stroke="#222" stroke-width="1.6"/><path d="M1 4 L11 4 L6 9 Z" fill="#222"/></svg>
<div class="r" style="left:384px;top:243px;width:1515px;height:781px;background:#ffffff;"></div>
<div class="r" style="left:1899px;top:243px;width:21px;height:781px;background:#f0f0f0;border-left:1px solid #e2e2e2"></div>
<svg class="r" style="left:1903px;top:251px;" width="12" height="8" viewBox="0 0 12 8"><path d="M0.5 7 L6 1 L11.5 7 Z" fill="#222"/></svg>
<svg class="r" style="left:1903px;top:1008px;" width="12" height="8" viewBox="0 0 12 8"><path d="M0.5 1 L6 7 L11.5 1 Z" fill="#222"/></svg>
<div class="r" style="left:1900px;top:625px;width:17px;height:19px;background:#f4f4f4;border:1px solid #9f9f9f;border-radius:2px"></div>
<div class="r" style="left:1904px;top:630px;width:9px;height:1px;background:#444;"></div>
<div class="r" style="left:1904px;top:633px;width:9px;height:1px;background:#444;"></div>
<div class="r" style="left:1904px;top:636px;width:9px;height:1px;background:#444;"></div>
<div class="r" style="left:385px;top:1024px;width:1535px;height:24px;background:#f0f0f0;"></div>
<div class="r" style="left:385px;top:1047px;width:1535px;height:1px;background:#dadada;"></div>
<span class="t" style="left:393.0px;top:1026.0px;font-size:13px;line-height:17px;color:#111;letter-spacing:0.34px;">3/32" = 1'-0"</span>
<svg class="r" style="left:0px;top:0px;pointer-events:none;" width="830" height="1048" viewBox="0 0 830 1048"><defs><pattern id="chk" width="2" height="2" patternUnits="userSpaceOnUse"><rect width="2" height="2" fill="#f4f4f4"/><rect width="1" height="1" fill="#555"/><rect x="1" y="1" width="1" height="1" fill="#555"/></pattern></defs><rect x="477.5" y="1027.5" width="19" height="12" fill="url(#chk)" stroke="#333" stroke-width="1"/><path d="M502 1032 L506 1028 H520 V1036.5 L516 1040.5 H502 Z" fill="#bfe0f5" stroke="#1f6fc2" stroke-width="1.4" stroke-linejoin="round"/><path d="M502 1032 H516 L520 1028 M516 1032 V1040.5" fill="none" stroke="#1f6fc2" stroke-width="1.2"/><g stroke="#f0a818" stroke-width="1.3"><path d="M533 1025 V1038 M526.5 1031.5 H539.5 M528.4 1026.9 L537.6 1036.1 M537.6 1026.9 L528.4 1036.1"/></g><circle cx="533" cy="1031.5" r="3.6" fill="#ffe680" stroke="#e8a010" stroke-width="1"/><path d="M536.3 1033.6 L542.7 1040.0 M542.7 1033.6 L536.3 1040.0" stroke="#e0202a" stroke-width="2.4"/><circle cx="558" cy="1032.5" r="5" fill="#e8f2fb" stroke="#2b7cd0" stroke-width="1.4"/><path d="M553 1040 H563" stroke="#555" stroke-width="1.4"/><path d="M562.3 1034.2 L568.7 1040.6000000000001 M568.7 1034.2 L562.3 1040.6000000000001" stroke="#e0202a" stroke-width="2.4"/><path d="M575 1030 L578 1031.5 Q578 1028.5 581 1028.5 H586 Q589 1028.5 589 1032 Q589 1036 586 1036.5 H580.5 Q578.5 1036 578 1034 L575 1030 Z" fill="#f1f1f1" stroke="#6b6f76" stroke-width="1.2"/><path d="M580.5 1028 H586.5" stroke="#6b6f76" stroke-width="1.2"/><circle cx="591.2" cy="1034.8" r="2.9" fill="#dff0ff" stroke="#2b86e0" stroke-width="1.3"/><rect x="589.9000000000001" y="1037.3999999999999" width="2.6" height="2.4" fill="#6b7078"/><path d="M601.5 1037 H605 V1029.5 H617 M608 1040.5 V1033 H617" fill="none" stroke="#1f6fc2" stroke-width="1.5"/><path d="M609 1036.5 H612" stroke="#e0202a" stroke-width="1.4"/><path d="M612.5999999999999 1034.0 L619.0 1040.4 M619.0 1034.0 L612.5999999999999 1040.4" stroke="#e0202a" stroke-width="2.4"/><path d="M626.5 1037 H630 V1029.5 H638 M633 1040.5 V1033 H638" fill="none" stroke="#1f6fc2" stroke-width="1.5"/><path d="M634 1036.5 H637" stroke="#e0202a" stroke-width="1.4"/><circle cx="641.3" cy="1032.8" r="2.9" fill="#dff0ff" stroke="#2b86e0" stroke-width="1.3"/><rect x="640.0" y="1035.3999999999999" width="2.6" height="2.4" fill="#6b7078"/><path d="M651.5 1040 V1032 Q651.5 1026 658 1026 Q664 1026 667 1031 V1034" fill="none" stroke="#5b5f66" stroke-width="1.4"/><path d="M655.5 1040.5 V1032.5 L659 1030 V1038 Z" fill="#d7d9dd" stroke="#5b5f66" stroke-width="1"/><rect x="660.5" y="1036" width="7.5" height="5" fill="#e8f3ec" stroke="#1e8a5a" stroke-width="1.2"/><path d="M662.3 1036 V1034 Q664.2 1031.8 666.2 1034" fill="none" stroke="#1e8a5a" stroke-width="1.1"/><path d="M676 1031 Q678 1028 680.5 1032 L683 1037" fill="none" stroke="#4b4f56" stroke-width="1.3"/><ellipse cx="684.5" cy="1037.2" rx="3.6" ry="2.6" fill="#dbeaf8" stroke="#4b4f56" stroke-width="1.2"/><ellipse cx="691" cy="1033.8" rx="3.4" ry="2.5" fill="#dbeaf8" stroke="#4b4f56" stroke-width="1.2"/><path d="M687.5 1035.2 L688.3 1034.8" stroke="#4b4f56" stroke-width="1.1"/><circle cx="709.9" cy="1033.2" r="2.9" fill="#dff0ff" stroke="#2b86e0" stroke-width="1.3"/><rect x="708.6" y="1035.8" width="2.6" height="2.4" fill="#6b7078"/><rect x="727" y="1029.5" width="16.5" height="10.5" rx="1" fill="#f4f4f4" stroke="#222" stroke-width="1.5"/><path d="M729.5 1029 V1027 M733.5 1029 V1027 M737.5 1029 V1027" stroke="#222" stroke-width="1.3"/><rect x="736.5" y="1034.5" width="6" height="5" fill="#fff" stroke="#333" stroke-width="1"/><circle cx="739.5" cy="1037" r="1.2" fill="#333"/><path d="M751 1040.5 V1032 L756 1028.5 L763 1030 V1040.5" fill="#e4e6ea" stroke="#5b5f66" stroke-width="1.3"/><path d="M754.5 1040.5 V1033 M758 1040.5 V1032.5 M761 1040.5 V1032.5" stroke="#c23030" stroke-width="1.2"/><circle cx="765.8" cy="1031.5" r="3.4" fill="#ffcf4a" stroke="#f08c1a" stroke-width="1"/><path d="M776.5 1033 L780.5 1029 H792 V1036.5 L788 1040.5 H776.5 Z" fill="#d0d2d6" stroke="#6b6f76" stroke-width="1.3" stroke-linejoin="round"/><path d="M781 1033 H788 V1040 M784.5 1029 V1033" fill="none" stroke="#6b6f76" stroke-width="1.1"/><path d="M780.5 1036 H785 V1040 H780.5 Z" fill="#f4f4f4" stroke="#6b6f76" stroke-width="0.9"/><path d="M801 1027 V1040.5 M819.5 1027 V1033" stroke="#333" stroke-width="1.3"/><path d="M801 1030 H819.5" stroke="#333" stroke-width="1" stroke-dasharray="3 1.5"/><path d="M801 1037.5 H809" stroke="#333" stroke-width="1" stroke-dasharray="2 1.5"/><rect x="811.5" y="1035" width="8" height="5.5" fill="#d9d9d9" stroke="#444" stroke-width="1.1"/><path d="M813.3 1035 V1033.4 Q815.5 1031.6 817.6 1033.4 V1035" fill="none" stroke="#444" stroke-width="1.1"/></svg>
<svg class="r" style="left:830px;top:1029px;" width="8" height="11" viewBox="0 0 8 11"><path d="M7 0.5 L1 5.5 L7 10.5 Z" fill="#222"/></svg>
<svg class="r" style="left:1883px;top:1029px;" width="8" height="11" viewBox="0 0 8 11"><path d="M1 0.5 L7 5.5 L1 10.5 Z" fill="#222"/></svg>
<div class="r" style="left:1351px;top:1025px;width:19px;height:19px;background:#f4f4f4;border:1px solid #9f9f9f;border-radius:2px"></div>
<div class="r" style="left:1356px;top:1030px;width:1px;height:9px;background:#444;"></div>
<div class="r" style="left:1359px;top:1030px;width:1px;height:9px;background:#444;"></div>
<div class="r" style="left:1362px;top:1030px;width:1px;height:9px;background:#444;"></div>
<svg class="r" style="left:1902px;top:1030px;" width="14" height="14" viewBox="0 0 14 14"><g fill="#b8b8b8"><rect x="10" y="2" width="2" height="2"/><rect x="6" y="6" width="2" height="2"/><rect x="10" y="6" width="2" height="2"/><rect x="2" y="10" width="2" height="2"/><rect x="6" y="10" width="2" height="2"/><rect x="10" y="10" width="2" height="2"/></g></svg>
<div class="r" style="left:0px;top:1048px;width:1920px;height:32px;background:#cbcbcb;"></div>
<span class="t" style="left:2.0px;top:1056.5px;font-size:15px;line-height:19px;color:#111;letter-spacing:-0.34px;">Click to select, TAB for alternates, CTRL adds, SHIFT unselects.</span>
<div class="r" style="left:725px;top:1054px;width:255px;height:21px;background:#ffffff;border:1px solid #e3e3e3"></div>
<svg class="r" style="left:964px;top:1062px;" width="10" height="6" viewBox="0 0 10 6"><path d="M0 0 L10 0 L5 5.5 Z" fill="#333"/></svg>
<span class="t" style="left:1013.0px;top:1057.0px;font-size:14px;line-height:18px;color:#222;letter-spacing:-0.34px;">:0</span>
<div class="r" style="left:1106px;top:1054px;width:254px;height:21px;background:#ffffff;border:1px solid #e3e3e3"></div>
<span class="t" style="left:1108.5px;top:1055.5px;font-size:15px;line-height:19px;color:#8a8a8a;letter-spacing:0.35px;">Main Model</span>
<svg class="r" style="left:1346px;top:1062px;" width="10" height="6" viewBox="0 0 10 6"><path d="M0 0 L10 0 L5 5.5 Z" fill="#333"/></svg>
<span class="t" style="left:1839.0px;top:1057.0px;font-size:14px;line-height:18px;color:#222;letter-spacing:-0.84px;">:1</span>
<svg class="r" style="left:0px;top:0px;pointer-events:none;" width="1920" height="1080" viewBox="0 0 1920 1080"><g fill="#b4b4b4" stroke="#9c9c9c" stroke-width="0.8"><rect x="699" y="1062" width="6" height="10"/><rect x="706" y="1058" width="6" height="14"/><rect x="712" y="1064" width="5" height="8"/><circle cx="703" cy="1058.5" r="2.4"/><circle cx="712" cy="1056" r="2.2"/></g><path d="M990 1071 L998 1061 M994 1057.5 H1004 V1062 H998" fill="none" stroke="#a6a6a6" stroke-width="2.6"/><rect x="988.5" y="1068" width="7" height="5" fill="#b8b8b8" stroke="#9c9c9c" stroke-width="0.8"/><rect x="1048.5" y="1056.5" width="18" height="16" rx="1" fill="#f6f6f6" stroke="#222" stroke-width="1.6"/><path d="M1048.5 1060 H1066.5" stroke="#222" stroke-width="2"/><path d="M1052 1064 H1054.5 M1056.5 1064 H1063.5 M1052 1067.5 H1054.5 M1056.5 1067.5 H1063.5" stroke="#222" stroke-width="1.4"/><rect x="1079" y="1056.5" width="17" height="16" fill="#b9b9b9" stroke="#a2a2a2" stroke-width="1"/><path d="M1083 1068 L1089 1062 L1092 1066" fill="none" stroke="#d9d9d9" stroke-width="1.6"/><g fill="none" stroke="#d9a400" stroke-width="2.2"><rect x="1641.5" y="1057.5" width="8.5" height="5" rx="2.5"/><rect x="1650.5" y="1057.5" width="8.5" height="5" rx="2.5"/></g><path d="M1647 1060 H1653" stroke="#f7d548" stroke-width="1.6"/><path transform="translate(1648.5,1061) scale(1.0)" d="M0 0 V11 L2.6 8.6 L4.6 13 L6.6 12 L4.6 7.8 L8 7.6 Z" fill="#fff" stroke="#222" stroke-width="1" stroke-linejoin="round"/><path d="M1670.5 1070 L1683 1056.5 L1684 1070 Z" fill="#cfe3f6" stroke="#2b74c8" stroke-width="1"/><path d="M1672 1066.5 H1683 M1675 1063 H1683.5" stroke="#2b74c8" stroke-width="1"/><path d="M1681.9 1055.9 L1689.1 1063.1 M1689.1 1055.9 L1681.9 1063.1" stroke="#e0202a" stroke-width="2.4"/><path transform="translate(1681.5,1062.5) scale(1.0)" d="M0 0 V11 L2.6 8.6 L4.6 13 L6.6 12 L4.6 7.8 L8 7.6 Z" fill="#fff" stroke="#222" stroke-width="1" stroke-linejoin="round"/><rect x="1701.5" y="1056" width="10" height="3.2" fill="#f6a04a" stroke="#c8541a" stroke-width="0.9"/><rect x="1703" y="1059.2" width="7" height="5.2" fill="#fbc27a" stroke="#c8541a" stroke-width="0.9"/><rect x="1700.5" y="1064.4" width="12" height="3.4" fill="#f6a04a" stroke="#c8541a" stroke-width="0.9"/><path d="M1706.5 1068 V1074" stroke="#333" stroke-width="1.2"/><path transform="translate(1711.5,1061.5) scale(1.0)" d="M0 0 V11 L2.6 8.6 L4.6 13 L6.6 12 L4.6 7.8 L8 7.6 Z" fill="#fff" stroke="#222" stroke-width="1" stroke-linejoin="round"/><path d="M1731.5 1059 L1741 1056.5 V1070.5 L1731.5 1073 Z" fill="#9cc6ee" stroke="#2b74c8" stroke-width="1.2"/><path d="M1742.4 1055.9 L1749.6 1063.1 M1749.6 1055.9 L1742.4 1063.1" stroke="#e0202a" stroke-width="2.4"/><path transform="translate(1741.5,1062.5) scale(1.0)" d="M0 0 V11 L2.6 8.6 L4.6 13 L6.6 12 L4.6 7.8 L8 7.6 Z" fill="#fff" stroke="#222" stroke-width="1" stroke-linejoin="round"/><path d="M1765.5 1056 V1067 M1760 1061.5 H1771" stroke="#222" stroke-width="1.3"/><path d="M1765.5 1054.8 L1763.6 1057.4 H1767.4 Z M1765.5 1068.2 L1763.6 1065.6 H1767.4 Z M1758.8 1061.5 L1761.4 1059.6 V1063.4 Z" fill="#222"/><path transform="translate(1770.5,1061) scale(1.0)" d="M0 0 V11 L2.6 8.6 L4.6 13 L6.6 12 L4.6 7.8 L8 7.6 Z" fill="#fff" stroke="#222" stroke-width="1" stroke-linejoin="round"/><circle cx="1806.3" cy="1064.9" r="2" fill="#b0b0b0"/><circle cx="1804.4" cy="1069.6" r="2" fill="#b0b0b0"/><circle cx="1799.7" cy="1071.5" r="2" fill="#b0b0b0"/><circle cx="1795.0" cy="1069.6" r="2" fill="#b0b0b0"/><circle cx="1793.1" cy="1064.9" r="2" fill="#b0b0b0"/><circle cx="1795.0" cy="1060.2" r="2" fill="#b0b0b0"/><circle cx="1799.7" cy="1058.3" r="2" fill="#b0b0b0"/><circle cx="1804.4" cy="1060.2" r="2" fill="#b0b0b0"/><path d="M1818.5 1056.5 H1837.5 L1830 1065.5 V1072 H1826 V1065.5 Z" fill="#eef0f2" stroke="#4b4f56" stroke-width="1.4" stroke-linejoin="round"/><path d="M1820.5 1058.8 H1835.5" stroke="#a8acb2" stroke-width="1.6"/></svg>
<svg class="r" style="left:385px;top:245px" width="1513.5" height="778.5" viewBox="385 245 1513.5 778.5">
<defs><linearGradient id="cshadow" x1="0" y1="0" x2="1" y2="0"><stop offset="0" stop-color="#5b7fcb"/><stop offset="1" stop-color="#2e3c63"/></linearGradient><linearGradient id="vleg" x1="0" y1="0" x2="1" y2="0"><stop offset="0" stop-color="#0a5cb8"/><stop offset="0.35" stop-color="#003f86"/><stop offset="1" stop-color="#00306a"/></linearGradient><linearGradient id="ulstrip" gradientUnits="userSpaceOnUse" x1="600" y1="380" x2="607" y2="371"><stop offset="0" stop-color="#99ccff"/><stop offset="0.7" stop-color="#99ccff"/><stop offset="1" stop-color="#5c7eb6"/></linearGradient><linearGradient id="urfade" gradientUnits="userSpaceOnUse" x1="1527" y1="330" x2="1533" y2="335.7"><stop offset="0" stop-color="#5c7eb6"/><stop offset="1" stop-color="#4a6390"/></linearGradient><linearGradient id="urang" gradientUnits="userSpaceOnUse" x1="1339.2" y1="345" x2="1370.5" y2="374.5"><stop offset="0" stop-color="#0066cc"/><stop offset="0.5" stop-color="#0066cc"/><stop offset="0.6" stop-color="#004c99"/><stop offset="0.86" stop-color="#004c99"/><stop offset="0.93" stop-color="#0066cc"/><stop offset="1" stop-color="#0066cc"/></linearGradient><linearGradient id="llang" gradientUnits="userSpaceOnUse" x1="750" y1="951" x2="779.5" y2="981"><stop offset="0" stop-color="#0066cc"/><stop offset="0.54" stop-color="#0066cc"/><stop offset="0.6" stop-color="#1a7ce2"/><stop offset="0.67" stop-color="#004c99"/><stop offset="1" stop-color="#004c99"/></linearGradient></defs>
<polygon points="1007.2,236.0 1034.0,236.0 1034.0,1032.0 1007.2,1032.0" fill="#2e3c63" stroke="#000" stroke-width="1.2" stroke-linejoin="round" />
<polygon points="1034.0,236.0 1040.8,236.0 1040.8,1032.0 1034.0,1032.0" fill="#5b7fcb" stroke="#000" stroke-width="1.2" stroke-linejoin="round" />
<polygon points="1040.8,236.0 1186.0,236.0 1186.0,1032.0 1040.8,1032.0" fill="#5b7fcb" stroke-linejoin="round" />
<polygon points="1184.5,236.0 1199.8,236.0 1199.8,1032.0 1184.5,1032.0" fill="#2e3c63" stroke-linejoin="round" />
<polygon points="1183.5,236.0 1188.0,236.0 1188.0,1032.0 1183.5,1032.0" fill="url(#cshadow)" stroke-linejoin="round" />
<polygon points="1199.8,236.0 1205.8,236.0 1205.8,1032.0 1199.8,1032.0" fill="#5b7fcb" stroke="#000" stroke-width="1.2" stroke-linejoin="round" />
<polyline points="1040.8,236.0 1040.8,1032.0" fill="none" stroke="#000" stroke-width="1.2" stroke-linecap="round"/>
<polygon points="377.0,698.0 1014.0,618.5 1017.0,618.0 1017.0,821.0 377.0,900.0" fill="#5c7eb6" stroke-linejoin="round" />
<polygon points="377.0,649.2 1010.0,570.8 1019.0,592.0 1029.5,608.5 377.0,689.8" fill="#8ab9fd" stroke="#000" stroke-width="1.2" stroke-linejoin="round" />
<polygon points="377.0,689.8 1029.5,609.0 1029.5,616.5 1014.0,618.5 377.0,698.0" fill="#5d81bd" stroke="#000" stroke-width="1.2" stroke-linejoin="round" />
<polygon points="377.0,898.5 1016.5,819.5 1019.0,822.5 1029.0,840.0 377.0,919.8" fill="#8ab9fd" stroke-linejoin="round" />
<polyline points="377.0,898.9 1016.5,819.9" fill="none" stroke="#b9dcff" stroke-width="1.6" stroke-linecap="round"/>
<polygon points="377.0,919.8 1029.0,840.0 1029.0,847.0 1014.0,849.5 377.0,928.5" fill="#5d81bd" stroke="#000" stroke-width="1.2" stroke-linejoin="round" />
<polyline points="1016.5,819.5 1019.0,822.5 1029.0,840.0" fill="none" stroke="#000" stroke-width="1" stroke-linecap="round"/>
<polygon points="1206.5,593.0 1906.0,507.0 1906.0,728.5 1206.5,815.9" fill="#5c7eb6" stroke-linejoin="round" />
<polygon points="1206.5,546.9 1906.0,458.3 1906.0,499.2 1206.5,586.4" fill="#8ab9fd" stroke="#000" stroke-width="1.2" stroke-linejoin="round" />
<polygon points="1206.5,586.4 1906.0,499.2 1906.0,507.0 1206.5,593.0" fill="#5d81bd" stroke="#000" stroke-width="1.2" stroke-linejoin="round" />
<polygon points="1206.5,794.7 1906.0,707.2 1906.0,728.5 1206.5,815.9" fill="#8ab9fd" stroke-linejoin="round" />
<polyline points="1206.5,795.2 1906.0,707.8" fill="none" stroke="#b9dcff" stroke-width="1.6" stroke-linecap="round"/>
<polygon points="1206.5,815.9 1906.0,728.5 1906.0,736.0 1206.5,823.4" fill="#5d81bd" stroke="#000" stroke-width="1.2" stroke-linejoin="round" />
<polygon points="750.8,624.5 750.8,500.0 800.0,420.0 875.0,402.0 1014.0,385.0 1015.5,386.5 1015.5,579.0 1013.5,586.0 1007.5,591.3" fill="#cc7722" stroke="#000" stroke-width="1.2" stroke-linejoin="round" />
<polygon points="875.0,400.2 1014.0,383.2 1015.2,386.6 875.0,403.8" fill="#f7a52c" stroke="#000" stroke-width="0.8" stroke-linejoin="round" />
<polygon points="1206.0,361.0 1338.0,345.0 1462.8,330.0 1462.8,535.0 1213.0,565.5 1208.0,563.0 1206.0,558.0" fill="#cc7722" stroke="#000" stroke-width="1.2" stroke-linejoin="round" />
<polygon points="1206.0,359.3 1338.0,343.2 1338.0,346.4 1206.0,362.8" fill="#f7a52c" stroke="#000" stroke-width="0.8" stroke-linejoin="round" />
<polygon points="751.7,881.0 1014.0,848.7 1015.2,850.0 1015.2,1026.0 751.7,1026.0" fill="#cc7722" stroke="#000" stroke-width="1.2" stroke-linejoin="round" />
<polygon points="1206.5,823.4 1462.8,791.4 1462.8,979.3 1206.5,1011.0" fill="#cc7722" stroke="#000" stroke-width="1.2" stroke-linejoin="round" />
<linearGradient id="vl1" gradientUnits="userSpaceOnUse" x1="1008" y1="0" x2="1025.25" y2="0"><stop offset="0" stop-color="#0066cc"/><stop offset="0.28" stop-color="#003a78"/><stop offset="1" stop-color="#002f63"/></linearGradient><polygon points="980.2,418.8 1009.0,419.5 1014.0,415.5 1025.2,431.5 1025.2,587.0 1021.8,587.0 1015.0,578.7 1009.0,575.2 980.2,577.5" fill="url(#vl1)" stroke="#000" stroke-width="1.2" stroke-linejoin="round" /><polygon points="980.2,418.8 1014.0,415.5 1025.2,431.5 1022.2,432.5 1012.0,420.0 980.2,421.9" fill="#1e90ff" stroke="#000" stroke-width="0.8" stroke-linejoin="round" /><polygon points="1005.4,432.5 1002.0,438.2 995.5,438.2 992.1,432.5 995.5,426.8 1002.0,426.8" fill="#828282" stroke="#1c1c1c" stroke-width="0.9" stroke-linejoin="round" /><polygon points="1005.4,465.0 1002.0,470.7 995.5,470.7 992.1,465.0 995.5,459.3 1002.0,459.3" fill="#828282" stroke="#1c1c1c" stroke-width="0.9" stroke-linejoin="round" /><polygon points="1005.4,497.5 1002.0,503.2 995.5,503.2 992.1,497.5 995.5,491.8 1002.0,491.8" fill="#828282" stroke="#1c1c1c" stroke-width="0.9" stroke-linejoin="round" /><polygon points="1005.4,531.0 1002.0,536.7 995.5,536.7 992.1,531.0 995.5,525.3 1002.0,525.3" fill="#828282" stroke="#1c1c1c" stroke-width="0.9" stroke-linejoin="round" /><polygon points="1005.4,564.0 1002.0,569.7 995.5,569.7 992.1,564.0 995.5,558.3 1002.0,558.3" fill="#828282" stroke="#1c1c1c" stroke-width="0.9" stroke-linejoin="round" />
<linearGradient id="vl2" gradientUnits="userSpaceOnUse" x1="1014" y1="0" x2="1033" y2="0"><stop offset="0" stop-color="#0066cc"/><stop offset="0.25" stop-color="#003a78"/><stop offset="1" stop-color="#002f63"/></linearGradient><polygon points="979.5,621.8 1016.5,617.3 1033.0,615.3 1033.0,826.0 1016.5,805.0 979.5,811.2" fill="url(#vl2)" stroke="#000" stroke-width="1.2" stroke-linejoin="round" /><polyline points="1021.2,618.5 1031.5,632.3" fill="none" stroke="#1e90ff" stroke-width="1.6" stroke-linecap="round"/>
<polygon points="1005.7,633.8 1002.1,640.0 994.9,640.0 991.3,633.8 994.9,627.5 1002.1,627.5" fill="#828282" stroke="#1c1c1c" stroke-width="0.9" stroke-linejoin="round" />
<polygon points="1005.7,666.2 1002.1,672.5 994.9,672.5 991.3,666.2 994.9,660.0 1002.1,660.0" fill="#828282" stroke="#1c1c1c" stroke-width="0.9" stroke-linejoin="round" />
<polygon points="1005.7,698.8 1002.1,705.0 994.9,705.0 991.3,698.8 994.9,692.5 1002.1,692.5" fill="#828282" stroke="#1c1c1c" stroke-width="0.9" stroke-linejoin="round" />
<polygon points="1005.7,731.2 1002.1,737.5 994.9,737.5 991.3,731.2 994.9,725.0 1002.1,725.0" fill="#828282" stroke="#1c1c1c" stroke-width="0.9" stroke-linejoin="round" />
<polygon points="1005.7,763.8 1002.1,770.0 994.9,770.0 991.3,763.8 994.9,757.5 1002.1,757.5" fill="#828282" stroke="#1c1c1c" stroke-width="0.9" stroke-linejoin="round" />
<polygon points="1005.7,797.5 1002.1,803.7 994.9,803.7 991.3,797.5 994.9,791.3 1002.1,791.3" fill="#828282" stroke="#1c1c1c" stroke-width="0.9" stroke-linejoin="round" />
<linearGradient id="vl3" gradientUnits="userSpaceOnUse" x1="1010.5" y1="0" x2="1025.25" y2="0"><stop offset="0" stop-color="#0066cc"/><stop offset="0.28" stop-color="#003a78"/><stop offset="1" stop-color="#002f63"/></linearGradient><polygon points="980.8,853.8 1011.5,850.5 1016.5,846.5 1025.2,862.5 1025.2,1022.5 1021.8,1022.5 1017.5,1012.2 1011.5,1008.8 980.8,1012.5" fill="url(#vl3)" stroke="#000" stroke-width="1.2" stroke-linejoin="round" /><polygon points="980.8,853.8 1016.5,846.5 1025.2,862.5 1022.2,863.5 1014.5,851.0 980.8,857.0" fill="#1e90ff" stroke="#000" stroke-width="0.8" stroke-linejoin="round" /><polygon points="1005.9,867.0 1002.5,872.7 996.0,872.7 992.6,867.0 996.0,861.3 1002.5,861.3" fill="#828282" stroke="#1c1c1c" stroke-width="0.9" stroke-linejoin="round" /><polygon points="1005.9,900.0 1002.5,905.7 996.0,905.7 992.6,900.0 996.0,894.3 1002.5,894.3" fill="#828282" stroke="#1c1c1c" stroke-width="0.9" stroke-linejoin="round" /><polygon points="1005.9,932.5 1002.5,938.2 996.0,938.2 992.6,932.5 996.0,926.8 1002.5,926.8" fill="#828282" stroke="#1c1c1c" stroke-width="0.9" stroke-linejoin="round" /><polygon points="1005.9,965.5 1002.5,971.2 996.0,971.2 992.6,965.5 996.0,959.8 1002.5,959.8" fill="#828282" stroke="#1c1c1c" stroke-width="0.9" stroke-linejoin="round" /><polygon points="1005.9,998.2 1002.5,1004.0 996.0,1004.0 992.6,998.2 996.0,992.5 1002.5,992.5" fill="#828282" stroke="#1c1c1c" stroke-width="0.9" stroke-linejoin="round" />
<polygon points="1206.0,391.2 1212.8,404.2 1212.8,549.0 1206.0,563.8" fill="#004c99" stroke="#000" stroke-width="1.2" stroke-linejoin="round" /><polygon points="1212.8,390.2 1236.5,387.5 1236.5,546.2 1212.8,549.0" fill="#0066cc" stroke="#000" stroke-width="1.2" stroke-linejoin="round" /><polyline points="1206.0,391.2 1212.8,390.2" fill="none" stroke="#000" stroke-width="1.2" stroke-linecap="round"/><polygon points="1225.8,405.0 1222.5,410.7 1216.0,410.7 1212.7,405.0 1216.0,399.3 1222.5,399.3" fill="#828282" stroke="#1c1c1c" stroke-width="0.9" stroke-linejoin="round" /><polygon points="1225.8,437.5 1222.5,443.2 1216.0,443.2 1212.7,437.5 1216.0,431.8 1222.5,431.8" fill="#828282" stroke="#1c1c1c" stroke-width="0.9" stroke-linejoin="round" /><polygon points="1225.8,470.0 1222.5,475.7 1216.0,475.7 1212.7,470.0 1216.0,464.3 1222.5,464.3" fill="#828282" stroke="#1c1c1c" stroke-width="0.9" stroke-linejoin="round" /><polygon points="1225.8,502.5 1222.5,508.2 1216.0,508.2 1212.7,502.5 1216.0,496.8 1222.5,496.8" fill="#828282" stroke="#1c1c1c" stroke-width="0.9" stroke-linejoin="round" /><polygon points="1225.8,536.2 1222.5,542.0 1216.0,542.0 1212.7,536.2 1216.0,530.5 1222.5,530.5" fill="#828282" stroke="#1c1c1c" stroke-width="0.9" stroke-linejoin="round" />
<polygon points="1206.5,593.0 1211.0,592.5 1211.0,785.0 1206.5,786.0" fill="#004c99" stroke="#000" stroke-width="1.2" stroke-linejoin="round" />
<polygon points="1211.0,592.5 1236.5,589.5 1236.5,782.0 1211.0,785.0" fill="#0066cc" stroke="#000" stroke-width="1.2" stroke-linejoin="round" />
<polyline points="1209.0,597.0 1209.0,783.0" fill="none" stroke="#3b9cff" stroke-width="0.8" stroke-linecap="round"/>
<circle cx="1220" cy="606" r="8.7" fill="#6c6c6c" stroke="#111" stroke-width="1.2"/>
<polygon points="1227.0,608.3 1222.3,613.0 1215.9,611.3 1214.2,604.9 1218.9,600.2 1225.3,601.9" fill="#858585" stroke="#111" stroke-width="1" stroke-linejoin="round" />
<circle cx="1221" cy="607.2" r="3.7" fill="#868686" stroke="#111" stroke-width="1"/>
<path d="M1217.5 599.2 l5 -0.4 l1 1.4 l-5 0.6 Z" fill="#dcdcdc"/>
<circle cx="1220" cy="638.75" r="8.7" fill="#6c6c6c" stroke="#111" stroke-width="1.2"/>
<polygon points="1227.0,641.1 1222.3,645.7 1215.9,644.0 1214.2,637.6 1218.9,633.0 1225.3,634.7" fill="#858585" stroke="#111" stroke-width="1" stroke-linejoin="round" />
<circle cx="1221" cy="639.95" r="3.7" fill="#868686" stroke="#111" stroke-width="1"/>
<path d="M1217.5 631.95 l5 -0.4 l1 1.4 l-5 0.6 Z" fill="#dcdcdc"/>
<circle cx="1220" cy="671" r="8.7" fill="#6c6c6c" stroke="#111" stroke-width="1.2"/>
<polygon points="1227.0,673.3 1222.3,678.0 1215.9,676.3 1214.2,669.9 1218.9,665.2 1225.3,666.9" fill="#858585" stroke="#111" stroke-width="1" stroke-linejoin="round" />
<circle cx="1221" cy="672.2" r="3.7" fill="#868686" stroke="#111" stroke-width="1"/>
<path d="M1217.5 664.2 l5 -0.4 l1 1.4 l-5 0.6 Z" fill="#dcdcdc"/>
<circle cx="1220" cy="703.75" r="8.7" fill="#6c6c6c" stroke="#111" stroke-width="1.2"/>
<polygon points="1227.0,706.1 1222.3,710.7 1215.9,709.0 1214.2,702.6 1218.9,698.0 1225.3,699.7" fill="#858585" stroke="#111" stroke-width="1" stroke-linejoin="round" />
<circle cx="1221" cy="704.95" r="3.7" fill="#868686" stroke="#111" stroke-width="1"/>
<path d="M1217.5 696.95 l5 -0.4 l1 1.4 l-5 0.6 Z" fill="#dcdcdc"/>
<circle cx="1220" cy="737" r="8.7" fill="#6c6c6c" stroke="#111" stroke-width="1.2"/>
<polygon points="1227.0,739.3 1222.3,744.0 1215.9,742.3 1214.2,735.9 1218.9,731.2 1225.3,732.9" fill="#858585" stroke="#111" stroke-width="1" stroke-linejoin="round" />
<circle cx="1221" cy="738.2" r="3.7" fill="#868686" stroke="#111" stroke-width="1"/>
<path d="M1217.5 730.2 l5 -0.4 l1 1.4 l-5 0.6 Z" fill="#dcdcdc"/>
<circle cx="1220" cy="770" r="8.7" fill="#6c6c6c" stroke="#111" stroke-width="1.2"/>
<polygon points="1227.0,772.3 1222.3,777.0 1215.9,775.3 1214.2,768.9 1218.9,764.2 1225.3,765.9" fill="#858585" stroke="#111" stroke-width="1" stroke-linejoin="round" />
<circle cx="1221" cy="771.2" r="3.7" fill="#868686" stroke="#111" stroke-width="1"/>
<path d="M1217.5 763.2 l5 -0.4 l1 1.4 l-5 0.6 Z" fill="#dcdcdc"/>
<polygon points="1206.0,827.0 1212.8,840.0 1212.8,983.0 1206.0,995.0" fill="#004c99" stroke="#000" stroke-width="1.2" stroke-linejoin="round" /><polygon points="1212.8,826.0 1236.5,822.5 1236.5,980.0 1212.8,983.0" fill="#0066cc" stroke="#000" stroke-width="1.2" stroke-linejoin="round" /><polyline points="1206.0,827.0 1212.8,826.0" fill="none" stroke="#000" stroke-width="1.2" stroke-linecap="round"/><polygon points="1225.8,840.0 1222.5,845.7 1216.0,845.7 1212.7,840.0 1216.0,834.3 1222.5,834.3" fill="#828282" stroke="#1c1c1c" stroke-width="0.9" stroke-linejoin="round" /><polygon points="1225.8,872.5 1222.5,878.2 1216.0,878.2 1212.7,872.5 1216.0,866.8 1222.5,866.8" fill="#828282" stroke="#1c1c1c" stroke-width="0.9" stroke-linejoin="round" /><polygon points="1225.8,905.0 1222.5,910.7 1216.0,910.7 1212.7,905.0 1216.0,899.3 1222.5,899.3" fill="#828282" stroke="#1c1c1c" stroke-width="0.9" stroke-linejoin="round" /><polygon points="1225.8,938.2 1222.5,944.0 1216.0,944.0 1212.7,938.2 1216.0,932.5 1222.5,932.5" fill="#828282" stroke="#1c1c1c" stroke-width="0.9" stroke-linejoin="round" /><polygon points="1225.8,971.2 1222.5,977.0 1216.0,977.0 1212.7,971.2 1216.0,965.5 1222.5,965.5" fill="#828282" stroke="#1c1c1c" stroke-width="0.9" stroke-linejoin="round" />
<rect x="1019" y="633.8" width="7.5" height="10.5" fill="#6a6a6a" stroke="#111" stroke-width="0.8"/><rect x="1020.5" y="634.8" width="4.5" height="4" fill="#e4e4e4"/>
<rect x="1019" y="666.0" width="7.5" height="10.5" fill="#6a6a6a" stroke="#111" stroke-width="0.8"/><rect x="1020.5" y="667.0" width="4.5" height="4" fill="#e4e4e4"/>
<rect x="1019" y="698.5" width="7.5" height="10.5" fill="#6a6a6a" stroke="#111" stroke-width="0.8"/><rect x="1020.5" y="699.5" width="4.5" height="4" fill="#e4e4e4"/>
<rect x="1019" y="731.0" width="7.5" height="10.5" fill="#6a6a6a" stroke="#111" stroke-width="0.8"/><rect x="1020.5" y="732.0" width="4.5" height="4" fill="#e4e4e4"/>
<rect x="1019" y="764.0" width="7.5" height="10.5" fill="#6a6a6a" stroke="#111" stroke-width="0.8"/><rect x="1020.5" y="765.0" width="4.5" height="4" fill="#e4e4e4"/>
<rect x="1019" y="797.5" width="7.5" height="10.5" fill="#6a6a6a" stroke="#111" stroke-width="0.8"/><rect x="1020.5" y="798.5" width="4.5" height="4" fill="#e4e4e4"/>
<path d="M1041 630.5 h5 l2.5 3 v6 l-2.5 3 h-5 Z" fill="#d8d8d8" stroke="#222" stroke-width="0.8"/><rect x="1041" y="636.0" width="6" height="5" fill="#8a8a8a"/>
<path d="M1041 663.5 h5 l2.5 3 v6 l-2.5 3 h-5 Z" fill="#d8d8d8" stroke="#222" stroke-width="0.8"/><rect x="1041" y="669.0" width="6" height="5" fill="#8a8a8a"/>
<path d="M1041 696.0 h5 l2.5 3 v6 l-2.5 3 h-5 Z" fill="#d8d8d8" stroke="#222" stroke-width="0.8"/><rect x="1041" y="701.5" width="6" height="5" fill="#8a8a8a"/>
<path d="M1041 728.5 h5 l2.5 3 v6 l-2.5 3 h-5 Z" fill="#d8d8d8" stroke="#222" stroke-width="0.8"/><rect x="1041" y="734.0" width="6" height="5" fill="#8a8a8a"/>
<path d="M1041 761.5 h5 l2.5 3 v6 l-2.5 3 h-5 Z" fill="#d8d8d8" stroke="#222" stroke-width="0.8"/><rect x="1041" y="767.0" width="6" height="5" fill="#8a8a8a"/>
<path d="M1041 794.5 h5 l2.5 3 v6 l-2.5 3 h-5 Z" fill="#d8d8d8" stroke="#222" stroke-width="0.8"/><rect x="1041" y="800.0" width="6" height="5" fill="#8a8a8a"/>
<path d="M1184 611.0 h7 l4 3 v9 l-4 3 h-7 l-3.5 -3 v-9 Z" fill="#dcdcdc" stroke="#222" stroke-width="0.9"/><path d="M1184 619.0 h11 v4 l-4 3 h-7 Z" fill="#8a8a8a"/><path d="M1184 611.0 v15" stroke="#444" stroke-width="0.7"/>
<path d="M1184 644.0 h7 l4 3 v9 l-4 3 h-7 l-3.5 -3 v-9 Z" fill="#dcdcdc" stroke="#222" stroke-width="0.9"/><path d="M1184 652.0 h11 v4 l-4 3 h-7 Z" fill="#8a8a8a"/><path d="M1184 644.0 v15" stroke="#444" stroke-width="0.7"/>
<path d="M1184 676.8 h7 l4 3 v9 l-4 3 h-7 l-3.5 -3 v-9 Z" fill="#dcdcdc" stroke="#222" stroke-width="0.9"/><path d="M1184 684.8 h11 v4 l-4 3 h-7 Z" fill="#8a8a8a"/><path d="M1184 676.8 v15" stroke="#444" stroke-width="0.7"/>
<path d="M1184 709.0 h7 l4 3 v9 l-4 3 h-7 l-3.5 -3 v-9 Z" fill="#dcdcdc" stroke="#222" stroke-width="0.9"/><path d="M1184 717.0 h11 v4 l-4 3 h-7 Z" fill="#8a8a8a"/><path d="M1184 709.0 v15" stroke="#444" stroke-width="0.7"/>
<path d="M1184 742.5 h7 l4 3 v9 l-4 3 h-7 l-3.5 -3 v-9 Z" fill="#dcdcdc" stroke="#222" stroke-width="0.9"/><path d="M1184 750.5 h11 v4 l-4 3 h-7 Z" fill="#8a8a8a"/><path d="M1184 742.5 v15" stroke="#444" stroke-width="0.7"/>
<path d="M1184 776.8 h7 l4 3 v9 l-4 3 h-7 l-3.5 -3 v-9 Z" fill="#dcdcdc" stroke="#222" stroke-width="0.9"/><path d="M1184 784.8 h11 v4 l-4 3 h-7 Z" fill="#8a8a8a"/><path d="M1184 776.8 v15" stroke="#444" stroke-width="0.7"/>
<polygon points="664.4,465.6 680.0,451.2 849.0,585.0 835.2,600.0 668.8,470.0" fill="#0066cc" stroke="#000" stroke-width="1.2" stroke-linejoin="round" />
<polygon points="664.4,465.6 680.0,451.2 684.0,455.0 668.8,470.0" fill="#004c99" stroke="#000" stroke-width="1.2" stroke-linejoin="round" />
<polygon points="777.0,524.5 781.5,521.0 861.0,589.0 857.5,592.0" fill="#1e90ff" stroke="#000" stroke-width="0.8" stroke-linejoin="round" />
<polygon points="775.0,527.0 777.0,524.5 857.5,592.0 849.0,585.0" fill="#0b5cb8" stroke="#000" stroke-width="0.8" stroke-linejoin="round" />
<polyline points="811.0,545.6 850.0,578.8" fill="none" stroke="#e03020" stroke-width="1.3" stroke-linecap="round"/>
<polygon points="776.5,536.4 772.9,540.7 767.4,539.7 765.5,534.4 769.1,530.1 774.6,531.1" fill="#828282" stroke="#1c1c1c" stroke-width="0.9" stroke-linejoin="round" />
<polygon points="798.5,553.5 794.9,557.8 789.4,556.8 787.5,551.5 791.1,547.2 796.6,548.2" fill="#828282" stroke="#1c1c1c" stroke-width="0.9" stroke-linejoin="round" />
<polygon points="820.2,570.3 816.6,574.6 811.1,573.6 809.2,568.3 812.8,564.0 818.3,565.0" fill="#828282" stroke="#1c1c1c" stroke-width="0.9" stroke-linejoin="round" />
<polygon points="841.5,587.2 837.9,591.5 832.4,590.5 830.5,585.2 834.1,580.9 839.6,581.9" fill="#828282" stroke="#1c1c1c" stroke-width="0.9" stroke-linejoin="round" />
<polygon points="429.5,236.0 591.5,236.0 841.5,430.6 772.5,506.2" fill="#5c7eb6" stroke="#000" stroke-width="1.2" stroke-linejoin="round" />
<polygon points="763.0,385.6 714.0,438.6 861.8,553.0 911.4,500.0" fill="#cc7722" stroke="#000" stroke-width="1.2" stroke-linejoin="round" />
<polyline points="765.0,388.5 717.5,439.0" fill="none" stroke="#000" stroke-width="0.7" stroke-linecap="round"/>
<polygon points="403.5,236.0 415.5,236.0 781.0,521.3 777.5,527.0" fill="#5c7eb6" stroke="#000" stroke-width="1.2" stroke-linejoin="round" />
<polygon points="415.5,236.0 434.5,236.0 776.0,502.5 774.5,508.8 781.0,521.3" fill="url(#ulstrip)" stroke-linejoin="round" />
<polyline points="415.5,236.0 781.0,521.3" fill="none" stroke="#000" stroke-width="1.2" stroke-linecap="round"/>
<polyline points="772.5,506.2 774.5,508.8 781.0,521.3" fill="none" stroke="#000" stroke-width="0.9" stroke-linecap="round"/>
<polygon points="783.3,493.8 786.7,495.0 774.6,507.9 772.5,506.2" fill="#ffffff" stroke="#000" stroke-width="0.6" stroke-linejoin="round" />
<polygon points="786.7,495.0 788.8,497.1 776.7,511.2 774.2,508.8" fill="#b06a22" stroke="#000" stroke-width="0.6" stroke-linejoin="round" />
<polygon points="591.5,236.0 603.0,236.0 778.3,368.5 859.2,431.5 859.2,435.4 852.9,440.4 843.3,432.7 841.7,430.4" fill="#5c7eb6" stroke="#000" stroke-width="1.2" stroke-linejoin="round" />
<polygon points="603.0,236.0 623.5,236.0 760.8,341.7 772.5,347.5 778.3,372.0" fill="#99ccff" stroke="#000" stroke-width="1.2" stroke-linejoin="round" />
<polygon points="841.2,430.8 843.3,432.7 836.7,440.0 834.6,437.9" fill="#ffffff" stroke="#000" stroke-width="0.6" stroke-linejoin="round" />
<polygon points="843.3,433.3 845.8,435.0 838.8,442.5 836.7,440.4" fill="#b06a22" stroke="#000" stroke-width="0.6" stroke-linejoin="round" />
<polygon points="760.8,341.7 772.5,347.5 770.0,353.0 766.0,350.5" fill="#004c99" stroke="#000" stroke-width="1.2" stroke-linejoin="round" />
<polygon points="772.5,347.5 786.7,333.3 955.8,467.5 945.0,499.0 778.3,370.0" fill="#0066cc" stroke="#000" stroke-width="1.2" stroke-linejoin="round" />
<polygon points="776.5,361.5 939.0,490.5 945.0,499.0 778.3,370.0" fill="#0b5cb8" stroke-linejoin="round" />
<polygon points="774.5,355.5 940.5,486.0 939.0,490.5 776.5,361.5" fill="#1e90ff" stroke-linejoin="round" />
<polyline points="786.7,333.3 955.8,467.5" fill="none" stroke="#000" stroke-width="2.2" stroke-linecap="round"/>
<polyline points="955.8,467.5 940.5,488.0 945.0,499.0 778.3,370.0 772.5,347.5 786.7,333.3" fill="none" stroke="#000" stroke-width="1" stroke-linecap="round"/>
<polygon points="880.8,421.8 877.2,426.1 871.7,425.1 869.8,419.8 873.4,415.5 878.9,416.5" fill="#828282" stroke="#1c1c1c" stroke-width="0.9" stroke-linejoin="round" />
<polygon points="902.5,438.2 898.9,442.5 893.4,441.5 891.5,436.2 895.1,431.9 900.6,432.9" fill="#828282" stroke="#1c1c1c" stroke-width="0.9" stroke-linejoin="round" />
<polygon points="924.2,455.2 920.6,459.5 915.1,458.5 913.2,453.2 916.8,448.9 922.3,449.9" fill="#828282" stroke="#1c1c1c" stroke-width="0.9" stroke-linejoin="round" />
<polygon points="946.3,471.8 942.7,476.1 937.2,475.1 935.3,469.8 938.9,465.5 944.4,466.5" fill="#828282" stroke="#1c1c1c" stroke-width="0.9" stroke-linejoin="round" />
<polygon points="768.8,409.4 763.5,415.7 755.4,414.3 752.6,406.6 757.9,400.3 766.0,401.7" fill="#5e5e5e" stroke="#111" stroke-width="1.3" stroke-linejoin="round" /><polygon points="770.5,411.6 765.7,417.3 758.3,416.0 755.7,409.0 760.5,403.3 767.9,404.6" fill="#8c8c8c" stroke="#111" stroke-width="1.1" stroke-linejoin="round" /><polygon points="757.9,400.3 766.0,401.7 767.9,404.6 760.5,403.3" fill="#e9e9e9" stroke="#111" stroke-width="0.6" stroke-linejoin="round" /><circle cx="763.6" cy="411.2" r="4.3" fill="#868686" stroke="#111" stroke-width="1.1"/>
<polygon points="794.5,429.0 789.2,435.3 781.1,433.9 778.3,426.2 783.6,419.9 791.7,421.3" fill="#5e5e5e" stroke="#111" stroke-width="1.3" stroke-linejoin="round" /><polygon points="796.2,431.2 791.4,436.9 784.0,435.6 781.4,428.6 786.2,422.9 793.6,424.2" fill="#8c8c8c" stroke="#111" stroke-width="1.1" stroke-linejoin="round" /><polygon points="783.6,419.9 791.7,421.3 793.6,424.2 786.2,422.9" fill="#e9e9e9" stroke="#111" stroke-width="0.6" stroke-linejoin="round" /><circle cx="789.3" cy="430.8" r="4.3" fill="#868686" stroke="#111" stroke-width="1.1"/>
<polygon points="819.7,448.7 814.4,455.0 806.3,453.6 803.5,445.9 808.8,439.6 816.9,441.0" fill="#5e5e5e" stroke="#111" stroke-width="1.3" stroke-linejoin="round" /><polygon points="821.4,450.9 816.6,456.6 809.2,455.3 806.6,448.3 811.4,442.6 818.8,443.9" fill="#8c8c8c" stroke="#111" stroke-width="1.1" stroke-linejoin="round" /><polygon points="808.8,439.6 816.9,441.0 818.8,443.9 811.4,442.6" fill="#e9e9e9" stroke="#111" stroke-width="0.6" stroke-linejoin="round" /><circle cx="814.5" cy="450.5" r="4.3" fill="#868686" stroke="#111" stroke-width="1.1"/>
<polygon points="844.6,467.5 839.3,473.8 831.2,472.4 828.4,464.7 833.7,458.4 841.8,459.8" fill="#5e5e5e" stroke="#111" stroke-width="1.3" stroke-linejoin="round" /><polygon points="846.3,469.7 841.5,475.4 834.1,474.1 831.5,467.1 836.3,461.4 843.7,462.7" fill="#8c8c8c" stroke="#111" stroke-width="1.1" stroke-linejoin="round" /><polygon points="833.7,458.4 841.8,459.8 843.7,462.7 836.3,461.4" fill="#e9e9e9" stroke="#111" stroke-width="0.6" stroke-linejoin="round" /><circle cx="839.4" cy="469.3" r="4.3" fill="#868686" stroke="#111" stroke-width="1.1"/>
<polygon points="869.8,486.8 864.5,493.1 856.4,491.7 853.6,484.0 858.9,477.7 867.0,479.1" fill="#5e5e5e" stroke="#111" stroke-width="1.3" stroke-linejoin="round" /><polygon points="871.5,489.0 866.7,494.7 859.3,493.4 856.7,486.4 861.5,480.7 868.9,482.0" fill="#8c8c8c" stroke="#111" stroke-width="1.1" stroke-linejoin="round" /><polygon points="858.9,477.7 867.0,479.1 868.9,482.0 861.5,480.7" fill="#e9e9e9" stroke="#111" stroke-width="0.6" stroke-linejoin="round" /><circle cx="864.6" cy="488.6" r="4.3" fill="#868686" stroke="#111" stroke-width="1.1"/>
<polygon points="895.1,507.2 889.8,513.5 881.7,512.1 878.9,504.4 884.2,498.1 892.3,499.5" fill="#5e5e5e" stroke="#111" stroke-width="1.3" stroke-linejoin="round" /><polygon points="896.8,509.4 892.0,515.1 884.6,513.8 882.0,506.8 886.8,501.1 894.2,502.4" fill="#8c8c8c" stroke="#111" stroke-width="1.1" stroke-linejoin="round" /><polygon points="884.2,498.1 892.3,499.5 894.2,502.4 886.8,501.1" fill="#e9e9e9" stroke="#111" stroke-width="0.6" stroke-linejoin="round" /><circle cx="889.9" cy="509.0" r="4.3" fill="#868686" stroke="#111" stroke-width="1.1"/>
<polygon points="744.7,436.7 739.4,443.0 731.3,441.6 728.5,433.9 733.8,427.6 741.9,429.0" fill="#5e5e5e" stroke="#111" stroke-width="1.3" stroke-linejoin="round" /><polygon points="746.4,438.9 741.6,444.6 734.2,443.3 731.6,436.3 736.4,430.6 743.8,431.9" fill="#8c8c8c" stroke="#111" stroke-width="1.1" stroke-linejoin="round" /><polygon points="733.8,427.6 741.9,429.0 743.8,431.9 736.4,430.6" fill="#e9e9e9" stroke="#111" stroke-width="0.6" stroke-linejoin="round" /><circle cx="739.5" cy="438.5" r="4.3" fill="#868686" stroke="#111" stroke-width="1.1"/>
<polygon points="770.4,455.9 765.1,462.2 757.0,460.8 754.2,453.1 759.5,446.8 767.6,448.2" fill="#5e5e5e" stroke="#111" stroke-width="1.3" stroke-linejoin="round" /><polygon points="772.1,458.1 767.3,463.8 759.9,462.5 757.3,455.5 762.1,449.8 769.5,451.1" fill="#8c8c8c" stroke="#111" stroke-width="1.1" stroke-linejoin="round" /><polygon points="759.5,446.8 767.6,448.2 769.5,451.1 762.1,449.8" fill="#e9e9e9" stroke="#111" stroke-width="0.6" stroke-linejoin="round" /><circle cx="765.2" cy="457.7" r="4.3" fill="#868686" stroke="#111" stroke-width="1.1"/>
<polygon points="794.9,475.2 789.6,481.5 781.5,480.1 778.7,472.4 784.0,466.1 792.1,467.5" fill="#5e5e5e" stroke="#111" stroke-width="1.3" stroke-linejoin="round" /><polygon points="796.6,477.4 791.8,483.1 784.4,481.8 781.8,474.8 786.6,469.1 794.0,470.4" fill="#8c8c8c" stroke="#111" stroke-width="1.1" stroke-linejoin="round" /><polygon points="784.0,466.1 792.1,467.5 794.0,470.4 786.6,469.1" fill="#e9e9e9" stroke="#111" stroke-width="0.6" stroke-linejoin="round" /><circle cx="789.7" cy="477.0" r="4.3" fill="#868686" stroke="#111" stroke-width="1.1"/>
<polygon points="819.7,494.4 814.4,500.7 806.3,499.3 803.5,491.6 808.8,485.3 816.9,486.7" fill="#5e5e5e" stroke="#111" stroke-width="1.3" stroke-linejoin="round" /><polygon points="821.4,496.6 816.6,502.3 809.2,501.0 806.6,494.0 811.4,488.3 818.8,489.6" fill="#8c8c8c" stroke="#111" stroke-width="1.1" stroke-linejoin="round" /><polygon points="808.8,485.3 816.9,486.7 818.8,489.6 811.4,488.3" fill="#e9e9e9" stroke="#111" stroke-width="0.6" stroke-linejoin="round" /><circle cx="814.5" cy="496.2" r="4.3" fill="#868686" stroke="#111" stroke-width="1.1"/>
<polygon points="845.0,514.1 839.7,520.4 831.6,519.0 828.8,511.3 834.1,505.0 842.2,506.4" fill="#5e5e5e" stroke="#111" stroke-width="1.3" stroke-linejoin="round" /><polygon points="846.7,516.3 841.9,522.0 834.5,520.7 831.9,513.7 836.7,508.0 844.1,509.3" fill="#8c8c8c" stroke="#111" stroke-width="1.1" stroke-linejoin="round" /><polygon points="834.1,505.0 842.2,506.4 844.1,509.3 836.7,508.0" fill="#e9e9e9" stroke="#111" stroke-width="0.6" stroke-linejoin="round" /><circle cx="839.8" cy="515.9" r="4.3" fill="#868686" stroke="#111" stroke-width="1.1"/>
<polygon points="870.7,533.7 865.4,540.0 857.3,538.6 854.5,530.9 859.8,524.6 867.9,526.0" fill="#5e5e5e" stroke="#111" stroke-width="1.3" stroke-linejoin="round" /><polygon points="872.4,535.9 867.6,541.6 860.2,540.3 857.6,533.3 862.4,527.6 869.8,528.9" fill="#8c8c8c" stroke="#111" stroke-width="1.1" stroke-linejoin="round" /><polygon points="859.8,524.6 867.9,526.0 869.8,528.9 862.4,527.6" fill="#e9e9e9" stroke="#111" stroke-width="0.6" stroke-linejoin="round" /><circle cx="865.5" cy="535.5" r="4.3" fill="#868686" stroke="#111" stroke-width="1.1"/>
<polygon points="1542.8,353.8 1549.0,360.0 1381.5,532.5 1362.8,516.2 1445.0,430.0 1500.0,372.0" fill="#0066cc" stroke="#000" stroke-width="1.2" stroke-linejoin="round" />
<polygon points="1445.0,430.0 1456.2,440.0 1374.0,526.0 1362.8,516.2" fill="#004c99" stroke="#000" stroke-width="1.2" stroke-linejoin="round" />
<polygon points="1456.2,440.0 1459.5,443.0 1377.5,529.0 1374.0,526.0" fill="#0066cc" stroke="#000" stroke-width="0.8" stroke-linejoin="round" />
<path d="M1445.5 455.9 A4.6 4.6 0 0 1 1452.2 449.3 Z" fill="#808080" stroke="#222" stroke-width="0.8"/>
<path d="M1424.3 477.8 A4.6 4.6 0 0 1 1430.9 471.2 Z" fill="#808080" stroke="#222" stroke-width="0.8"/>
<path d="M1402.4 500.3 A4.6 4.6 0 0 1 1409.0 493.7 Z" fill="#808080" stroke="#222" stroke-width="0.8"/>
<path d="M1380.8 522.4 A4.6 4.6 0 0 1 1387.4 515.8 Z" fill="#808080" stroke="#222" stroke-width="0.8"/>
<polygon points="1514.4,236.0 1622.9,236.0 1439.0,421.2 1434.0,416.0 1380.0,375.7" fill="#5c7eb6" stroke="#000" stroke-width="1.2" stroke-linejoin="round" />
<polygon points="1454.2,300.7 1502.6,340.2 1355.2,490.0 1306.8,450.5" fill="#cc7722" stroke="#000" stroke-width="1.2" stroke-linejoin="round" />
<polyline points="1428.8,418.8 1382.5,467.5 1356.0,489.0" fill="none" stroke="#000" stroke-width="0.7" stroke-linecap="round"/>
<polygon points="1622.9,236.0 1649.1,236.0 1452.0,436.5 1439.0,421.2" fill="#4a6390" stroke-linejoin="round" />
<polygon points="1618.9,236.0 1626.9,236.0 1443.0,421.2 1435.0,421.2" fill="url(#urfade)" stroke-linejoin="round" />
<polygon points="1649.1,236.0 1656.5,236.0 1457.1,442.6 1452.0,436.5" fill="#5d81bd" stroke="#000" stroke-width="1.2" stroke-linejoin="round" />
<polyline points="1649.1,236.0 1452.0,436.5 1439.0,421.2 1434.0,416.0" fill="none" stroke="#000" stroke-width="1.2" stroke-linecap="round"/>
<polygon points="1432.5,416.3 1437.0,412.0 1446.0,427.5 1441.0,431.0" fill="#0066cc" stroke="#000" stroke-width="0.8" stroke-linejoin="round" />
<polygon points="1429.5,415.5 1433.5,411.5 1435.5,413.0 1431.5,417.0" fill="#ffffff" stroke-linejoin="round" />
<polygon points="1424.2,254.0 1452.5,283.2 1373.3,372.3 1286.5,456.2 1259.0,428.8" fill="url(#urang)" stroke="#000" stroke-width="1.2" stroke-linejoin="round" />
<polyline points="1424.2,254.0 1259.0,428.8" fill="none" stroke="#000" stroke-width="2.2" stroke-linecap="round"/>
<polyline points="1259.0,428.8 1286.5,456.2 1373.3,372.3 1452.5,283.2 1424.2,254.0" fill="none" stroke="#000" stroke-width="1" stroke-linecap="round"/>
<polygon points="1346.8,364.4 1342.5,368.0 1337.2,366.1 1336.2,360.6 1340.5,357.0 1345.8,358.9" fill="#828282" stroke="#1c1c1c" stroke-width="0.9" stroke-linejoin="round" />
<polygon points="1326.8,386.4 1322.5,390.0 1317.2,388.1 1316.2,382.6 1320.5,379.0 1325.8,380.9" fill="#828282" stroke="#1c1c1c" stroke-width="0.9" stroke-linejoin="round" />
<polygon points="1304.8,408.4 1300.5,412.0 1295.2,410.1 1294.2,404.6 1298.5,401.0 1303.8,402.9" fill="#828282" stroke="#1c1c1c" stroke-width="0.9" stroke-linejoin="round" />
<polygon points="1283.0,430.7 1278.7,434.3 1273.5,432.3 1272.5,426.8 1276.8,423.2 1282.0,425.2" fill="#828282" stroke="#1c1c1c" stroke-width="0.9" stroke-linejoin="round" />
<polygon points="1424.2,254.0 1433.3,257.3 1452.5,283.2" fill="#003a80" stroke="#000" stroke-width="0.8" stroke-linejoin="round" />
<polygon points="1452.0,236.0 1505.3,236.0 1373.3,372.3 1452.5,283.2 1433.3,257.3" fill="#4a6390" stroke="#000" stroke-width="1.2" stroke-linejoin="round" />
<polygon points="1505.3,236.0 1514.4,236.0 1380.0,375.7 1373.3,372.3" fill="#5d81bd" stroke="#000" stroke-width="1.2" stroke-linejoin="round" />
<polygon points="1373.3,372.3 1380.0,375.7 1377.0,379.0 1370.5,375.0" fill="#d98a2b" stroke="#000" stroke-width="0.6" stroke-linejoin="round" />
<polygon points="1464.2,322.3 1458.9,328.6 1450.8,327.2 1448.0,319.5 1453.3,313.2 1461.4,314.6" fill="#5e5e5e" stroke="#111" stroke-width="1.3" stroke-linejoin="round" /><polygon points="1465.9,324.5 1461.1,330.2 1453.7,328.9 1451.1,321.9 1455.9,316.2 1463.3,317.5" fill="#8c8c8c" stroke="#111" stroke-width="1.1" stroke-linejoin="round" /><polygon points="1453.3,313.2 1461.4,314.6 1463.3,317.5 1455.9,316.2" fill="#e9e9e9" stroke="#111" stroke-width="0.6" stroke-linejoin="round" /><circle cx="1459.0" cy="324.1" r="4.3" fill="#868686" stroke="#111" stroke-width="1.1"/>
<polygon points="1438.4,348.2 1433.1,354.5 1425.0,353.1 1422.2,345.4 1427.5,339.1 1435.6,340.5" fill="#5e5e5e" stroke="#111" stroke-width="1.3" stroke-linejoin="round" /><polygon points="1440.1,350.4 1435.3,356.1 1427.9,354.8 1425.3,347.8 1430.1,342.1 1437.5,343.4" fill="#8c8c8c" stroke="#111" stroke-width="1.1" stroke-linejoin="round" /><polygon points="1427.5,339.1 1435.6,340.5 1437.5,343.4 1430.1,342.1" fill="#e9e9e9" stroke="#111" stroke-width="0.6" stroke-linejoin="round" /><circle cx="1433.2" cy="350.0" r="4.3" fill="#868686" stroke="#111" stroke-width="1.1"/>
<polygon points="1413.2,374.0 1407.9,380.3 1399.8,378.9 1397.0,371.2 1402.3,364.9 1410.4,366.3" fill="#5e5e5e" stroke="#111" stroke-width="1.3" stroke-linejoin="round" /><polygon points="1414.9,376.2 1410.1,381.9 1402.7,380.6 1400.1,373.6 1404.9,367.9 1412.3,369.2" fill="#8c8c8c" stroke="#111" stroke-width="1.1" stroke-linejoin="round" /><polygon points="1402.3,364.9 1410.4,366.3 1412.3,369.2 1404.9,367.9" fill="#e9e9e9" stroke="#111" stroke-width="0.6" stroke-linejoin="round" /><circle cx="1408.0" cy="375.8" r="4.3" fill="#868686" stroke="#111" stroke-width="1.1"/>
<polygon points="1388.2,400.2 1382.9,406.5 1374.8,405.1 1372.0,397.4 1377.3,391.1 1385.4,392.5" fill="#5e5e5e" stroke="#111" stroke-width="1.3" stroke-linejoin="round" /><polygon points="1389.9,402.4 1385.1,408.1 1377.7,406.8 1375.1,399.8 1379.9,394.1 1387.3,395.4" fill="#8c8c8c" stroke="#111" stroke-width="1.1" stroke-linejoin="round" /><polygon points="1377.3,391.1 1385.4,392.5 1387.3,395.4 1379.9,394.1" fill="#e9e9e9" stroke="#111" stroke-width="0.6" stroke-linejoin="round" /><circle cx="1383.0" cy="402.0" r="4.3" fill="#868686" stroke="#111" stroke-width="1.1"/>
<polygon points="1362.6,426.4 1357.3,432.7 1349.2,431.3 1346.4,423.6 1351.7,417.3 1359.8,418.7" fill="#5e5e5e" stroke="#111" stroke-width="1.3" stroke-linejoin="round" /><polygon points="1364.3,428.6 1359.5,434.3 1352.1,433.0 1349.5,426.0 1354.3,420.3 1361.7,421.6" fill="#8c8c8c" stroke="#111" stroke-width="1.1" stroke-linejoin="round" /><polygon points="1351.7,417.3 1359.8,418.7 1361.7,421.6 1354.3,420.3" fill="#e9e9e9" stroke="#111" stroke-width="0.6" stroke-linejoin="round" /><circle cx="1357.4" cy="428.2" r="4.3" fill="#868686" stroke="#111" stroke-width="1.1"/>
<polygon points="1337.1,452.4 1331.8,458.7 1323.7,457.3 1320.9,449.6 1326.2,443.3 1334.3,444.7" fill="#5e5e5e" stroke="#111" stroke-width="1.3" stroke-linejoin="round" /><polygon points="1338.8,454.6 1334.0,460.3 1326.6,459.0 1324.0,452.0 1328.8,446.3 1336.2,447.6" fill="#8c8c8c" stroke="#111" stroke-width="1.1" stroke-linejoin="round" /><polygon points="1326.2,443.3 1334.3,444.7 1336.2,447.6 1328.8,446.3" fill="#e9e9e9" stroke="#111" stroke-width="0.6" stroke-linejoin="round" /><circle cx="1331.9" cy="454.2" r="4.3" fill="#868686" stroke="#111" stroke-width="1.1"/>
<polygon points="1488.2,342.7 1482.9,349.0 1474.8,347.6 1472.0,339.9 1477.3,333.6 1485.4,335.0" fill="#5e5e5e" stroke="#111" stroke-width="1.3" stroke-linejoin="round" /><polygon points="1489.9,344.9 1485.1,350.6 1477.7,349.3 1475.1,342.3 1479.9,336.6 1487.3,337.9" fill="#8c8c8c" stroke="#111" stroke-width="1.1" stroke-linejoin="round" /><polygon points="1477.3,333.6 1485.4,335.0 1487.3,337.9 1479.9,336.6" fill="#e9e9e9" stroke="#111" stroke-width="0.6" stroke-linejoin="round" /><circle cx="1483.0" cy="344.5" r="4.3" fill="#868686" stroke="#111" stroke-width="1.1"/>
<polygon points="1463.2,368.8 1457.9,375.1 1449.8,373.7 1447.0,366.0 1452.3,359.7 1460.4,361.1" fill="#5e5e5e" stroke="#111" stroke-width="1.3" stroke-linejoin="round" /><polygon points="1464.9,371.0 1460.1,376.7 1452.7,375.4 1450.1,368.4 1454.9,362.7 1462.3,364.0" fill="#8c8c8c" stroke="#111" stroke-width="1.1" stroke-linejoin="round" /><polygon points="1452.3,359.7 1460.4,361.1 1462.3,364.0 1454.9,362.7" fill="#e9e9e9" stroke="#111" stroke-width="0.6" stroke-linejoin="round" /><circle cx="1458.0" cy="370.6" r="4.3" fill="#868686" stroke="#111" stroke-width="1.1"/>
<polygon points="1438.0,394.7 1432.7,401.0 1424.6,399.6 1421.8,391.9 1427.1,385.6 1435.2,387.0" fill="#5e5e5e" stroke="#111" stroke-width="1.3" stroke-linejoin="round" /><polygon points="1439.7,396.9 1434.9,402.6 1427.5,401.3 1424.9,394.3 1429.7,388.6 1437.1,389.9" fill="#8c8c8c" stroke="#111" stroke-width="1.1" stroke-linejoin="round" /><polygon points="1427.1,385.6 1435.2,387.0 1437.1,389.9 1429.7,388.6" fill="#e9e9e9" stroke="#111" stroke-width="0.6" stroke-linejoin="round" /><circle cx="1432.8" cy="396.5" r="4.3" fill="#868686" stroke="#111" stroke-width="1.1"/>
<polygon points="1413.0,420.1 1407.7,426.4 1399.6,425.0 1396.8,417.3 1402.1,411.0 1410.2,412.4" fill="#5e5e5e" stroke="#111" stroke-width="1.3" stroke-linejoin="round" /><polygon points="1414.7,422.3 1409.9,428.0 1402.5,426.7 1399.9,419.7 1404.7,414.0 1412.1,415.3" fill="#8c8c8c" stroke="#111" stroke-width="1.1" stroke-linejoin="round" /><polygon points="1402.1,411.0 1410.2,412.4 1412.1,415.3 1404.7,414.0" fill="#e9e9e9" stroke="#111" stroke-width="0.6" stroke-linejoin="round" /><circle cx="1407.8" cy="421.9" r="4.3" fill="#868686" stroke="#111" stroke-width="1.1"/>
<polygon points="1387.6,446.3 1382.3,452.6 1374.2,451.2 1371.4,443.5 1376.7,437.2 1384.8,438.6" fill="#5e5e5e" stroke="#111" stroke-width="1.3" stroke-linejoin="round" /><polygon points="1389.3,448.5 1384.5,454.2 1377.1,452.9 1374.5,445.9 1379.3,440.2 1386.7,441.5" fill="#8c8c8c" stroke="#111" stroke-width="1.1" stroke-linejoin="round" /><polygon points="1376.7,437.2 1384.8,438.6 1386.7,441.5 1379.3,440.2" fill="#e9e9e9" stroke="#111" stroke-width="0.6" stroke-linejoin="round" /><circle cx="1382.4" cy="448.1" r="4.3" fill="#868686" stroke="#111" stroke-width="1.1"/>
<polygon points="1362.1,472.8 1356.8,479.1 1348.7,477.7 1345.9,470.0 1351.2,463.7 1359.3,465.1" fill="#5e5e5e" stroke="#111" stroke-width="1.3" stroke-linejoin="round" /><polygon points="1363.8,475.0 1359.0,480.7 1351.6,479.4 1349.0,472.4 1353.8,466.7 1361.2,468.0" fill="#8c8c8c" stroke="#111" stroke-width="1.1" stroke-linejoin="round" /><polygon points="1351.2,463.7 1359.3,465.1 1361.2,468.0 1353.8,466.7" fill="#e9e9e9" stroke="#111" stroke-width="0.6" stroke-linejoin="round" /><circle cx="1356.9" cy="474.6" r="4.3" fill="#868686" stroke="#111" stroke-width="1.1"/>
<polygon points="756.0,944.0 743.3,950.0 672.5,1027.0 678.0,1027.0" fill="#004c99" stroke="#000" stroke-width="1.2" stroke-linejoin="round" />
<polygon points="831.7,871.7 840.0,871.7 860.8,895.0 738.0,1027.0 673.0,1027.0" fill="url(#llang)" stroke="#000" stroke-width="1.2" stroke-linejoin="round" />
<polyline points="831.7,871.7 840.0,871.7 860.8,895.0 738.0,1027.0" fill="none" stroke="#000" stroke-width="1" stroke-linecap="round"/>
<polyline points="831.7,871.7 673.0,1027.0" fill="none" stroke="#000" stroke-width="1.6" stroke-linecap="round"/>
<polygon points="777.0,983.0 784.0,988.0 751.0,1027.0 737.0,1027.0" fill="#5c7eb6" stroke="#000" stroke-width="1.2" stroke-linejoin="round" />
<polygon points="860.0,908.3 909.5,950.0 836.5,1027.0 750.0,1027.0" fill="#cc7722" stroke="#000" stroke-width="1.2" stroke-linejoin="round" />
<polyline points="858.0,907.5 783.0,984.0" fill="none" stroke="#000" stroke-width="0.7" stroke-linecap="round"/>
<polygon points="781.0,979.0 784.0,977.0 786.5,980.0 783.5,982.5" fill="#ffffff" stroke="#000" stroke-width="0.5" stroke-linejoin="round" />
<polygon points="871.3,932.1 866.0,938.4 857.9,937.0 855.1,929.3 860.4,923.0 868.5,924.4" fill="#5e5e5e" stroke="#111" stroke-width="1.3" stroke-linejoin="round" /><polygon points="873.0,934.3 868.2,940.0 860.8,938.7 858.2,931.7 863.0,926.0 870.4,927.3" fill="#8c8c8c" stroke="#111" stroke-width="1.1" stroke-linejoin="round" /><polygon points="860.4,923.0 868.5,924.4 870.4,927.3 863.0,926.0" fill="#e9e9e9" stroke="#111" stroke-width="0.6" stroke-linejoin="round" /><circle cx="866.1" cy="933.9" r="4.3" fill="#868686" stroke="#111" stroke-width="1.1"/>
<polygon points="895.8,952.6 890.5,958.9 882.4,957.5 879.6,949.8 884.9,943.5 893.0,944.9" fill="#5e5e5e" stroke="#111" stroke-width="1.3" stroke-linejoin="round" /><polygon points="897.5,954.8 892.7,960.5 885.3,959.2 882.7,952.2 887.5,946.5 894.9,947.8" fill="#8c8c8c" stroke="#111" stroke-width="1.1" stroke-linejoin="round" /><polygon points="884.9,943.5 893.0,944.9 894.9,947.8 887.5,946.5" fill="#e9e9e9" stroke="#111" stroke-width="0.6" stroke-linejoin="round" /><circle cx="890.6" cy="954.4" r="4.3" fill="#868686" stroke="#111" stroke-width="1.1"/>
<polygon points="845.8,958.4 840.5,964.7 832.4,963.3 829.6,955.6 834.9,949.3 843.0,950.7" fill="#5e5e5e" stroke="#111" stroke-width="1.3" stroke-linejoin="round" /><polygon points="847.5,960.6 842.7,966.3 835.3,965.0 832.7,958.0 837.5,952.3 844.9,953.6" fill="#8c8c8c" stroke="#111" stroke-width="1.1" stroke-linejoin="round" /><polygon points="834.9,949.3 843.0,950.7 844.9,953.6 837.5,952.3" fill="#e9e9e9" stroke="#111" stroke-width="0.6" stroke-linejoin="round" /><circle cx="840.6" cy="960.2" r="4.3" fill="#868686" stroke="#111" stroke-width="1.1"/>
<polygon points="870.3,979.3 865.0,985.6 856.9,984.2 854.1,976.5 859.4,970.2 867.5,971.6" fill="#5e5e5e" stroke="#111" stroke-width="1.3" stroke-linejoin="round" /><polygon points="872.0,981.5 867.2,987.2 859.8,985.9 857.2,978.9 862.0,973.2 869.4,974.5" fill="#8c8c8c" stroke="#111" stroke-width="1.1" stroke-linejoin="round" /><polygon points="859.4,970.2 867.5,971.6 869.4,974.5 862.0,973.2" fill="#e9e9e9" stroke="#111" stroke-width="0.6" stroke-linejoin="round" /><circle cx="865.1" cy="981.1" r="4.3" fill="#868686" stroke="#111" stroke-width="1.1"/>
<polygon points="820.8,984.3 815.5,990.6 807.4,989.2 804.6,981.5 809.9,975.2 818.0,976.6" fill="#5e5e5e" stroke="#111" stroke-width="1.3" stroke-linejoin="round" /><polygon points="822.5,986.5 817.7,992.2 810.3,990.9 807.7,983.9 812.5,978.2 819.9,979.5" fill="#8c8c8c" stroke="#111" stroke-width="1.1" stroke-linejoin="round" /><polygon points="809.9,975.2 818.0,976.6 819.9,979.5 812.5,978.2" fill="#e9e9e9" stroke="#111" stroke-width="0.6" stroke-linejoin="round" /><circle cx="815.6" cy="986.1" r="4.3" fill="#868686" stroke="#111" stroke-width="1.1"/>
<polygon points="844.9,1005.1 839.6,1011.4 831.5,1010.0 828.7,1002.3 834.0,996.0 842.1,997.4" fill="#5e5e5e" stroke="#111" stroke-width="1.3" stroke-linejoin="round" /><polygon points="846.6,1007.3 841.8,1013.0 834.4,1011.7 831.8,1004.7 836.6,999.0 844.0,1000.3" fill="#8c8c8c" stroke="#111" stroke-width="1.1" stroke-linejoin="round" /><polygon points="834.0,996.0 842.1,997.4 844.0,1000.3 836.6,999.0" fill="#e9e9e9" stroke="#111" stroke-width="0.6" stroke-linejoin="round" /><circle cx="839.7" cy="1006.9" r="4.3" fill="#868686" stroke="#111" stroke-width="1.1"/>
<polygon points="795.3,1010.1 790.0,1016.4 781.9,1015.0 779.1,1007.3 784.4,1001.0 792.5,1002.4" fill="#5e5e5e" stroke="#111" stroke-width="1.3" stroke-linejoin="round" /><polygon points="797.0,1012.3 792.2,1018.0 784.8,1016.7 782.2,1009.7 787.0,1004.0 794.4,1005.3" fill="#8c8c8c" stroke="#111" stroke-width="1.1" stroke-linejoin="round" /><polygon points="784.4,1001.0 792.5,1002.4 794.4,1005.3 787.0,1004.0" fill="#e9e9e9" stroke="#111" stroke-width="0.6" stroke-linejoin="round" /><circle cx="790.1" cy="1011.9" r="4.3" fill="#868686" stroke="#111" stroke-width="1.1"/>
<polygon points="819.6,1030.1 814.3,1036.4 806.2,1035.0 803.4,1027.3 808.7,1021.0 816.8,1022.4" fill="#5e5e5e" stroke="#111" stroke-width="1.3" stroke-linejoin="round" /><polygon points="821.3,1032.3 816.5,1038.0 809.1,1036.7 806.5,1029.7 811.3,1024.0 818.7,1025.3" fill="#8c8c8c" stroke="#111" stroke-width="1.1" stroke-linejoin="round" /><polygon points="808.7,1021.0 816.8,1022.4 818.7,1025.3 811.3,1024.0" fill="#e9e9e9" stroke="#111" stroke-width="0.6" stroke-linejoin="round" /><circle cx="814.4" cy="1031.9" r="4.3" fill="#868686" stroke="#111" stroke-width="1.1"/>
<polygon points="936.7,954.2 956.7,970.0 903.5,1027.0 864.5,1027.0" fill="#0066cc" stroke="#000" stroke-width="1.2" stroke-linejoin="round" />
<polygon points="936.7,954.2 943.5,964.5 888.0,1027.0 864.5,1027.0" fill="#004c99" stroke-linejoin="round" />
<polyline points="943.5,964.5 888.0,1027.0" fill="none" stroke="#000" stroke-width="0.8" stroke-linecap="round"/>
<polyline points="947.0,967.0 893.5,1027.0" fill="none" stroke="#000" stroke-width="0.8" stroke-linecap="round"/>
<polyline points="936.7,954.2 956.7,970.0 903.5,1027.0" fill="none" stroke="#000" stroke-width="1" stroke-linecap="round"/>
<polyline points="936.7,954.2 864.5,1027.0" fill="none" stroke="#e03020" stroke-width="1.4" stroke-linecap="round"/>
<polygon points="1279.4,910.6 1259.4,931.2 1380.5,1027.0 1432.0,1027.0" fill="#0066cc" stroke="#000" stroke-width="1.2" stroke-linejoin="round" />
<polygon points="1279.4,910.6 1361.2,973.0 1372.0,986.0 1368.5,988.5 1283.5,917.5 1276.5,914.0" fill="#1e90ff" stroke="#000" stroke-width="0.7" stroke-linejoin="round" />
<polyline points="1276.9,916.2 1415.5,1027.0" fill="none" stroke="#000" stroke-width="0.8" stroke-linecap="round"/>
<polyline points="1259.4,931.2 1279.4,910.6" fill="none" stroke="#000" stroke-width="1" stroke-linecap="round"/>
<polygon points="1436.0,893.0 1607.0,1027.0 1395.0,1027.0 1375.0,963.0" fill="#5c7eb6" stroke-linejoin="round" />
<polygon points="1370.0,985.0 1375.0,990.0 1412.5,1027.0 1391.0,1027.0" fill="#5d81bd" stroke="#000" stroke-width="1.2" stroke-linejoin="round" />
<polyline points="1372.5,987.5 1401.5,1027.0" fill="none" stroke="#000" stroke-width="0.8" stroke-linecap="round"/>
<polygon points="1371.9,971.0 1381.0,985.0 1440.5,1027.0 1413.0,1027.0 1375.0,990.0 1372.0,980.0" fill="#99ccff" stroke="#000" stroke-width="1.2" stroke-linejoin="round" />
<polygon points="1361.9,972.5 1370.0,966.2 1380.0,985.0 1375.0,990.0" fill="#4a6390" stroke="#000" stroke-width="0.8" stroke-linejoin="round" />
<polygon points="1368.8,963.8 1378.8,956.0 1380.5,958.0 1370.5,966.0" fill="#ffffff" stroke-linejoin="round" />
<polygon points="1453.0,905.0 1457.5,901.2 1618.3,1027.0 1606.7,1027.0" fill="#5d81bd" stroke="#000" stroke-width="1.2" stroke-linejoin="round" />
<polyline points="1455.5,903.0 1612.5,1027.0" fill="none" stroke="#000" stroke-width="0.8" stroke-linecap="round"/>
<polygon points="1536.2,946.9 1639.0,1027.0 1618.3,1027.0 1537.5,961.9" fill="#99ccff" stroke="#000" stroke-width="1.2" stroke-linejoin="round" />
<polygon points="1442.5,890.0 1457.5,901.2 1452.5,906.2" fill="#4a6390" stroke="#000" stroke-width="0.8" stroke-linejoin="round" />
<polygon points="1427.5,898.5 1438.5,888.0 1440.5,890.0 1429.5,900.5" fill="#ffffff" stroke-linejoin="round" />
<polygon points="1355.2,847.0 1502.8,960.5 1454.4,1014.4 1306.7,899.8" fill="#cc7722" stroke="#000" stroke-width="1.2" stroke-linejoin="round" />
<polyline points="1308.5,901.5 1356.0,850.0" fill="none" stroke="#000" stroke-width="0.7" stroke-linecap="round"/>
<polygon points="1381.5,802.5 1364.0,820.0 1374.0,832.5 1536.9,961.9 1539.4,958.8 1533.8,947.5 1549.4,928.8" fill="#0066cc" stroke="#000" stroke-width="1.2" stroke-linejoin="round" />
<polygon points="1371.0,829.0 1374.0,832.5 1536.9,961.9 1539.4,958.8 1533.0,951.0" fill="#0b5cb8" stroke-linejoin="round" />
<polygon points="1369.0,824.5 1533.8,947.5 1533.0,951.5 1371.0,829.0" fill="#1e90ff" stroke-linejoin="round" />
<polyline points="1381.5,802.5 1549.4,928.8" fill="none" stroke="#000" stroke-width="2.2" stroke-linecap="round"/>
<polyline points="1549.4,928.8 1533.8,947.5 1539.4,958.8 1536.9,961.9 1374.0,832.5 1364.0,820.0 1381.5,802.5" fill="none" stroke="#000" stroke-width="1" stroke-linecap="round"/>
<polygon points="1361.8,870.6 1356.6,876.9 1348.5,875.5 1345.7,867.8 1350.9,861.5 1359.0,862.9" fill="#5e5e5e" stroke="#111" stroke-width="1.3" stroke-linejoin="round" /><polygon points="1363.5,872.8 1358.7,878.5 1351.3,877.2 1348.8,870.2 1353.6,864.5 1361.0,865.8" fill="#8c8c8c" stroke="#111" stroke-width="1.1" stroke-linejoin="round" /><polygon points="1350.9,861.5 1359.0,862.9 1361.0,865.8 1353.6,864.5" fill="#e9e9e9" stroke="#111" stroke-width="0.6" stroke-linejoin="round" /><circle cx="1356.7" cy="872.4" r="4.3" fill="#868686" stroke="#111" stroke-width="1.1"/>
<polygon points="1387.3,890.1 1382.1,896.4 1374.0,895.0 1371.2,887.3 1376.4,881.0 1384.5,882.4" fill="#5e5e5e" stroke="#111" stroke-width="1.3" stroke-linejoin="round" /><polygon points="1389.0,892.3 1384.2,898.0 1376.8,896.7 1374.3,889.7 1379.1,884.0 1386.5,885.3" fill="#8c8c8c" stroke="#111" stroke-width="1.1" stroke-linejoin="round" /><polygon points="1376.4,881.0 1384.5,882.4 1386.5,885.3 1379.1,884.0" fill="#e9e9e9" stroke="#111" stroke-width="0.6" stroke-linejoin="round" /><circle cx="1382.2" cy="891.9" r="4.3" fill="#868686" stroke="#111" stroke-width="1.1"/>
<polygon points="1412.3,910.1 1407.1,916.4 1399.0,915.0 1396.2,907.3 1401.4,901.0 1409.5,902.4" fill="#5e5e5e" stroke="#111" stroke-width="1.3" stroke-linejoin="round" /><polygon points="1414.0,912.3 1409.2,918.0 1401.8,916.7 1399.3,909.7 1404.1,904.0 1411.5,905.3" fill="#8c8c8c" stroke="#111" stroke-width="1.1" stroke-linejoin="round" /><polygon points="1401.4,901.0 1409.5,902.4 1411.5,905.3 1404.1,904.0" fill="#e9e9e9" stroke="#111" stroke-width="0.6" stroke-linejoin="round" /><circle cx="1407.2" cy="911.9" r="4.3" fill="#868686" stroke="#111" stroke-width="1.1"/>
<polygon points="1441.0,931.2 1434.0,939.4 1423.4,937.6 1419.7,927.4 1426.7,919.2 1437.3,921.0" fill="#1a3fd0" stroke="#0b2590" stroke-width="0.9" stroke-linejoin="round" /><polygon points="1438.3,931.7 1434.0,936.9 1427.3,935.7 1425.0,929.3 1429.3,924.1 1436.0,925.3" fill="#7d7d7d" stroke="#1c1c1c" stroke-width="1" stroke-linejoin="round" /><circle cx="1432.1" cy="931.1" r="3.8" fill="#868686" stroke="#1c1c1c" stroke-width="1"/>
<polygon points="1466.7,950.4 1459.8,958.7 1449.2,956.8 1445.5,946.7 1452.4,938.4 1463.0,940.3" fill="#1a3fd0" stroke="#0b2590" stroke-width="0.9" stroke-linejoin="round" /><polygon points="1464.1,950.9 1459.7,956.1 1453.0,955.0 1450.7,948.6 1455.1,943.4 1461.8,944.5" fill="#7d7d7d" stroke="#1c1c1c" stroke-width="1" stroke-linejoin="round" /><circle cx="1457.8" cy="950.4" r="3.8" fill="#868686" stroke="#1c1c1c" stroke-width="1"/>
<polygon points="1491.7,970.4 1484.8,978.7 1474.2,976.8 1470.5,966.7 1477.4,958.4 1488.0,960.3" fill="#1a3fd0" stroke="#0b2590" stroke-width="0.9" stroke-linejoin="round" /><polygon points="1489.1,970.9 1484.7,976.1 1478.0,975.0 1475.7,968.6 1480.1,963.4 1486.8,964.5" fill="#7d7d7d" stroke="#1c1c1c" stroke-width="1" stroke-linejoin="round" /><circle cx="1482.8" cy="970.4" r="3.8" fill="#868686" stroke="#1c1c1c" stroke-width="1"/>
<polygon points="1337.6,897.6 1332.3,903.9 1324.2,902.5 1321.4,894.8 1326.7,888.5 1334.8,889.9" fill="#5e5e5e" stroke="#111" stroke-width="1.3" stroke-linejoin="round" /><polygon points="1339.3,899.8 1334.5,905.5 1327.1,904.2 1324.5,897.2 1329.3,891.5 1336.7,892.8" fill="#8c8c8c" stroke="#111" stroke-width="1.1" stroke-linejoin="round" /><polygon points="1326.7,888.5 1334.8,889.9 1336.7,892.8 1329.3,891.5" fill="#e9e9e9" stroke="#111" stroke-width="0.6" stroke-linejoin="round" /><circle cx="1332.4" cy="899.4" r="4.3" fill="#868686" stroke="#111" stroke-width="1.1"/>
<polygon points="1362.6,917.1 1357.3,923.4 1349.2,922.0 1346.4,914.3 1351.7,908.0 1359.8,909.4" fill="#5e5e5e" stroke="#111" stroke-width="1.3" stroke-linejoin="round" /><polygon points="1364.3,919.3 1359.5,925.0 1352.1,923.7 1349.5,916.7 1354.3,911.0 1361.7,912.3" fill="#8c8c8c" stroke="#111" stroke-width="1.1" stroke-linejoin="round" /><polygon points="1351.7,908.0 1359.8,909.4 1361.7,912.3 1354.3,911.0" fill="#e9e9e9" stroke="#111" stroke-width="0.6" stroke-linejoin="round" /><circle cx="1357.4" cy="918.9" r="4.3" fill="#868686" stroke="#111" stroke-width="1.1"/>
<polygon points="1388.1,937.1 1382.8,943.4 1374.7,942.0 1371.9,934.3 1377.2,928.0 1385.3,929.4" fill="#5e5e5e" stroke="#111" stroke-width="1.3" stroke-linejoin="round" /><polygon points="1389.8,939.3 1385.0,945.0 1377.6,943.7 1375.0,936.7 1379.8,931.0 1387.2,932.3" fill="#8c8c8c" stroke="#111" stroke-width="1.1" stroke-linejoin="round" /><polygon points="1377.2,928.0 1385.3,929.4 1387.2,932.3 1379.8,931.0" fill="#e9e9e9" stroke="#111" stroke-width="0.6" stroke-linejoin="round" /><circle cx="1382.9" cy="938.9" r="4.3" fill="#868686" stroke="#111" stroke-width="1.1"/>
<polygon points="1416.7,957.9 1409.8,966.2 1399.2,964.3 1395.5,954.2 1402.4,945.9 1413.0,947.8" fill="#1a3fd0" stroke="#0b2590" stroke-width="0.9" stroke-linejoin="round" /><polygon points="1414.1,958.4 1409.7,963.6 1403.0,962.5 1400.7,956.1 1405.1,950.9 1411.8,952.0" fill="#7d7d7d" stroke="#1c1c1c" stroke-width="1" stroke-linejoin="round" /><circle cx="1407.8" cy="957.9" r="3.8" fill="#868686" stroke="#1c1c1c" stroke-width="1"/>
<polygon points="1441.7,977.2 1434.8,985.4 1424.2,983.6 1420.5,973.4 1427.4,965.2 1438.0,967.0" fill="#1a3fd0" stroke="#0b2590" stroke-width="0.9" stroke-linejoin="round" /><polygon points="1439.1,977.7 1434.7,982.9 1428.0,981.7 1425.7,975.3 1430.1,970.1 1436.8,971.3" fill="#7d7d7d" stroke="#1c1c1c" stroke-width="1" stroke-linejoin="round" /><circle cx="1432.8" cy="977.1" r="3.8" fill="#868686" stroke="#1c1c1c" stroke-width="1"/>
<polygon points="1468.0,997.2 1461.0,1005.4 1450.4,1003.6 1446.7,993.4 1453.7,985.2 1464.3,987.0" fill="#1a3fd0" stroke="#0b2590" stroke-width="0.9" stroke-linejoin="round" /><polygon points="1465.3,997.7 1461.0,1002.9 1454.3,1001.7 1452.0,995.3 1456.3,990.1 1463.0,991.3" fill="#7d7d7d" stroke="#1c1c1c" stroke-width="1" stroke-linejoin="round" /><circle cx="1459.1" cy="997.1" r="3.8" fill="#868686" stroke="#1c1c1c" stroke-width="1"/>
</svg>
<svg class="r" style="left:0px;top:0px;pointer-events:none;" width="1920" height="1080" viewBox="0 0 1920 1080"><defs><radialGradient id="vsh"><stop offset="0" stop-color="#bdbdbd" stop-opacity="0.75"/><stop offset="1" stop-color="#bdbdbd" stop-opacity="0"/></radialGradient><linearGradient id="vc1" x1="0" y1="0" x2="0" y2="1"><stop offset="0" stop-color="#f4f4f4"/><stop offset="1" stop-color="#e2e2e2"/></linearGradient></defs><ellipse cx="1807.6" cy="366.5" rx="66" ry="33" fill="#f1f1f1" stroke="#cfcfcf" stroke-width="1" stroke-dasharray="4 2"/><ellipse cx="1807.6" cy="365" rx="50" ry="24.5" fill="#ffffff" stroke="#d2d2d2" stroke-width="1" stroke-dasharray="4 2"/><ellipse cx="1812" cy="372" rx="34" ry="15" fill="url(#vsh)"/><text x="1741" y="371" font-family="Liberation Sans, sans-serif" font-size="9" font-weight="bold" fill="#c9c9c9" stroke="#ababab" stroke-width="0.5" transform="rotate(-20 1747 368)">oo</text><text x="1858" y="354" font-family="Liberation Sans, sans-serif" font-size="9" font-weight="bold" fill="#c9c9c9" stroke="#ababab" stroke-width="0.5" transform="rotate(-25 1864 351)">zz</text><text x="1816" y="397" font-family="Liberation Sans, sans-serif" font-size="11" font-weight="bold" fill="#d4d4d4" stroke="#a6a6a6" stroke-width="0.6" transform="rotate(-8 1826 393)">E3</text><g stroke="#a9a9a9" stroke-width="0.9" stroke-linejoin="round"><path d="M1779.2 306.6 L1824.9 302.5 L1839 320.2 L1789.6 325.5 Z" fill="#f2f2f2"/><path d="M1779.2 306.6 L1789.6 325.5 L1790.2 370.6 L1780.8 346 Z" fill="#dcdcdc"/><path d="M1789.6 325.5 L1839 320.2 L1836.9 363.3 L1790.2 370.6 Z" fill="url(#vc1)"/></g><rect x="1798" y="327" width="36" height="6" fill="#dfe3ea" opacity="0.7"/><text x="1799" y="351.5" font-family="Liberation Sans, sans-serif" font-size="12.5" font-weight="bold" fill="#a2a6ad" textLength="32" lengthAdjust="spacingAndGlyphs" transform="rotate(-5 1815 346)">RIGHT</text><text x="1802" y="315" font-family="Liberation Sans, sans-serif" font-size="7" font-weight="bold" fill="#b5b5b5" transform="rotate(-10 1808 313)">TOP</text><text x="1781" y="340" font-family="Liberation Sans, sans-serif" font-size="6" font-weight="bold" fill="#a5a5a5" transform="rotate(65 1784 338)">FR</text><rect x="1863.5" y="417" width="33" height="115.5" rx="4" fill="rgba(232,232,232,0.62)" stroke="#b9b9b9" stroke-width="1"/><circle cx="1889.5" cy="423.2" r="3.2" fill="#f4f4f4" stroke="#9a9a9a" stroke-width="0.9"/><path d="M1888 421.7 L1891 424.7 M1891 421.7 L1888 424.7" stroke="#8a8a8a" stroke-width="0.8"/><path d="M1872 440 Q1872 437 1875 437 H1886 Q1890 437 1890 441 V451 Q1890 458 1883 458 H1877 Q1870 458 1870 451 V442 Z" fill="#f7f7f7" fill-opacity="0.8" stroke="#8e8e8e" stroke-width="1"/><circle cx="1880" cy="447.6" r="7.6" fill="none" stroke="#8e8e8e" stroke-width="1"/><circle cx="1880" cy="447.6" r="4.6" fill="#fdfdfd" stroke="#8e8e8e" stroke-width="1"/><path d="M1877 467.5 H1882 L1879.5 470.5 Z" fill="#8a8a8a"/><path d="M1868 474.5 H1892" stroke="#b5b5b5" stroke-width="1"/><rect x="1872.5" y="483.5" width="10" height="10" fill="#7dbb8a" stroke="#3d8a50" stroke-width="1"/><circle cx="1883.5" cy="493" r="3" fill="#e9f2fa" stroke="#6b6f76" stroke-width="1.2"/><path d="M1885.6 495.2 L1888 498" stroke="#6b6f76" stroke-width="1.6"/><path d="M1877.5 510 H1882.5 L1880 513 Z" fill="#8a8a8a"/><circle cx="1890" cy="525.6" r="3.2" fill="#f4f4f4" stroke="#9a9a9a" stroke-width="0.9"/><path d="M1888.3 525 H1891.7 L1890 527.2 Z" fill="#777"/></svg>
</body></html>
